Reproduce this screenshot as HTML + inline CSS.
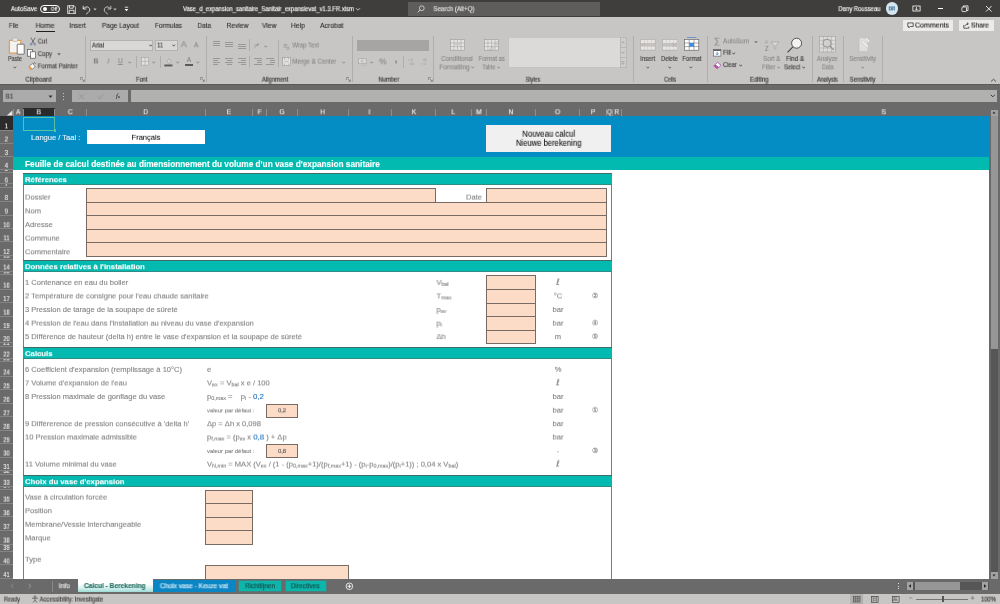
<!DOCTYPE html>
<html lang="fr"><head><meta charset="utf-8"><title>Vase_d_expansion_sanitaire_Sanitair_expansievat_v1.3.FR.xlsm - Excel</title>
<style>
html,body{margin:0;padding:0;background:#fff;}
body{width:1000px;height:604px;position:relative;overflow:hidden;font-family:"Liberation Sans",sans-serif;}
#app{position:absolute;left:0;top:0;width:1000px;height:604px;overflow:hidden;}
#app div,#app svg{position:absolute;}
.t{white-space:nowrap;will-change:transform;-webkit-text-stroke:0.12px;}
sub{font-size:72%;vertical-align:baseline;position:relative;top:0.25em;line-height:0;}
</style></head><body><div id="app">
<div style="left:0px;top:0px;width:1000px;height:17.3px;background:#3f3e3d;"></div>
<div class="t" style="top:5px;line-height:7px;height:7px;font-size:6.6px;color:#fff;left:10px;transform:translate(0.90px,0.16px) rotate(0.02deg) scaleX(0.916);transform-origin:0 50%;">AutoSave</div>
<div style="left:40.3px;top:4.5px;width:20.2px;height:8.6px;border:0.8px solid #fff;border-radius:5px;box-sizing:border-box;"></div>
<div style="left:43.2px;top:6.9px;width:3.7px;height:3.7px;border-radius:2px;background:#fff;"></div>
<div class="t" style="top:5px;line-height:6px;height:6px;font-size:5.6px;color:#fff;left:-96px;width:300px;text-align:center;transform:translate(0.10px,0.80px) rotate(0.02deg) scaleX(0.842);transform-origin:50% 50%;">Off</div>
<svg style="left:67px;top:4.8px;" width="9.4" height="9.4" viewBox="0 0 9.4 9.4"><path d="M0.7 0.7h6.4l1.6 1.6v6.4h-8z M2.4 0.7v2.5h3.8v-2.5 M2.2 8.7v-3.4h4.8v3.4" fill="none" stroke="#fff" stroke-width="0.8"/></svg>
<svg style="left:82px;top:4.5px;" width="9" height="10" viewBox="0 0 9 10"><path d="M1.2 0.8v3.2h3.2 M1.4 3.9c1.2-2 3.6-2.6 5.2-1.4 1.8 1.4 1.4 3.8-0.4 5l-2 1.6" fill="none" stroke="#fff" stroke-width="0.8"/></svg>
<svg style="left:93px;top:7.8px;" width="4" height="3" viewBox="0 0 4 3"><path d="M0.3 0.5h3.4l-1.7 2z" fill="#bbb"/></svg>
<svg style="left:102.5px;top:4.5px;" width="9" height="10" viewBox="0 0 9 10"><path d="M7.8 0.8v3.2h-3.2 M7.6 3.9c-1.2-2-3.6-2.6-5.2-1.4-1.8 1.4-1.4 3.8 0.4 5l2 1.6" fill="none" stroke="#ddd" stroke-width="0.8"/></svg>
<svg style="left:113px;top:7.8px;" width="4" height="3" viewBox="0 0 4 3"><path d="M0.3 0.5h3.4l-1.7 2z" fill="#bbb"/></svg>
<svg style="left:124.2px;top:6px;" width="5" height="6" viewBox="0 0 5 6"><path d="M0.8 1.2h3.4" stroke="#fff" stroke-width="0.8"/><path d="M0.6 3h3.8l-1.9 2.2z" fill="#fff"/></svg>
<div class="t" style="top:5px;line-height:7px;height:7px;font-size:6.6px;color:#fff;left:183px;transform:translate(0.00px,0.16px) rotate(0.02deg) scaleX(0.894);transform-origin:0 50%;">Vase_d_expansion_sanitaire_Sanitair_expansievat_v1.3.FR.xlsm</div>
<svg style="left:355px;top:6.6px;" width="6" height="5" viewBox="0 0 6 5"><path d="M1 1.2l2 2 2-2" fill="none" stroke="#fff" stroke-width="0.7"/></svg>
<div style="left:408px;top:2px;width:192px;height:13.5px;background:#5e5d5c;"></div>
<svg style="left:417px;top:4.5px;" width="8" height="8" viewBox="0 0 8 8"><circle cx="4.8" cy="3.2" r="2.4" fill="none" stroke="#eee" stroke-width="0.7"/><path d="M3.1 4.9l-2.4 2.4" stroke="#eee" stroke-width="0.8"/></svg>
<div class="t" style="top:5px;line-height:7px;height:7px;font-size:6.6px;color:#e6e6e6;left:433px;transform:translate(0.50px,0.16px) rotate(0.02deg) scaleX(0.936);transform-origin:0 50%;">Search (Alt+Q)</div>
<div class="t" style="top:5px;line-height:7px;height:7px;font-size:6.6px;color:#fff;left:580px;width:300px;text-align:right;transform:translate(0.50px,0.16px) rotate(0.02deg) scaleX(0.895);transform-origin:100% 50%;">Dany Rousseau</div>
<div style="left:885.5px;top:2.2px;width:12.6px;height:12.6px;border-radius:7px;background:#d6e6ef;"></div>
<div class="t" style="top:6px;line-height:5px;height:5px;font-size:4.6px;color:#2b5f8a;font-weight:bold;left:741px;width:300px;text-align:center;transform:translate(0.80px,0.45px) rotate(0.02deg);transform-origin:50% 50%;">DR</div>
<svg style="left:911.5px;top:4.5px;" width="9" height="8" viewBox="0 0 9 8"><rect x="0.9" y="1" width="7.2" height="5" fill="none" stroke="#fff" stroke-width="0.8"/><path d="M4.5 2v3 M3.2 3.8l1.3 1.3 1.3-1.3" fill="none" stroke="#fff" stroke-width="0.7"/></svg>
<div style="left:937.5px;top:8px;width:5.5px;height:0.9px;background:#fff;"></div>
<svg style="left:960.5px;top:5px;" width="8" height="8" viewBox="0 0 8 8"><rect x="0.9" y="2" width="4.6" height="4.6" rx="0.8" fill="none" stroke="#fff" stroke-width="0.8"/><path d="M2.4 2V0.9h4.6v4.6H5.6" fill="none" stroke="#fff" stroke-width="0.8"/></svg>
<svg style="left:984.5px;top:5px;" width="8" height="8" viewBox="0 0 8 8"><path d="M1 1l5.6 5.6 M6.6 1L1 6.6" stroke="#fff" stroke-width="0.85"/></svg>
<div style="left:0px;top:17.3px;width:1000px;height:67px;background:#c8c6c4;"></div>
<div class="t" style="top:21px;line-height:7px;height:7px;font-size:7px;color:#2f2e2d;left:-137px;width:300px;text-align:center;transform:translate(0.70px,0.91px) rotate(0.02deg) scaleX(0.833);transform-origin:50% 50%;">File</div>
<div class="t" style="top:21px;line-height:7px;height:7px;font-size:7px;color:#2f2e2d;left:-105px;width:300px;text-align:center;transform:translate(0.05px,0.91px) rotate(0.02deg) scaleX(1.011);transform-origin:50% 50%;">Home</div>
<div class="t" style="top:21px;line-height:7px;height:7px;font-size:7px;color:#2f2e2d;left:-73px;width:300px;text-align:center;transform:translate(0.60px,0.91px) rotate(0.02deg) scaleX(0.948);transform-origin:50% 50%;">Insert</div>
<div class="t" style="top:21px;line-height:7px;height:7px;font-size:7px;color:#2f2e2d;left:-30px;width:300px;text-align:center;transform:translate(0.50px,0.91px) rotate(0.02deg) scaleX(0.941);transform-origin:50% 50%;">Page Layout</div>
<div class="t" style="top:21px;line-height:7px;height:7px;font-size:7px;color:#2f2e2d;left:18px;width:300px;text-align:center;transform:translate(0.40px,0.91px) rotate(0.02deg) scaleX(0.932);transform-origin:50% 50%;">Formulas</div>
<div class="t" style="top:21px;line-height:7px;height:7px;font-size:7px;color:#2f2e2d;left:54px;width:300px;text-align:center;transform:translate(0.25px,0.91px) rotate(0.02deg) scaleX(0.912);transform-origin:50% 50%;">Data</div>
<div class="t" style="top:21px;line-height:7px;height:7px;font-size:7px;color:#2f2e2d;left:87px;width:300px;text-align:center;transform:translate(0.50px,0.91px) rotate(0.02deg) scaleX(0.958);transform-origin:50% 50%;">Review</div>
<div class="t" style="top:21px;line-height:7px;height:7px;font-size:7px;color:#2f2e2d;left:119px;width:300px;text-align:center;transform:translate(0.25px,0.91px) rotate(0.02deg) scaleX(0.964);transform-origin:50% 50%;">View</div>
<div class="t" style="top:21px;line-height:7px;height:7px;font-size:7px;color:#2f2e2d;left:148px;width:300px;text-align:center;transform:translate(0.00px,0.91px) rotate(0.02deg) scaleX(0.972);transform-origin:50% 50%;">Help</div>
<div class="t" style="top:21px;line-height:7px;height:7px;font-size:7px;color:#2f2e2d;left:181px;width:300px;text-align:center;transform:translate(0.75px,0.91px) rotate(0.02deg) scaleX(0.974);transform-origin:50% 50%;">Acrobat</div>
<div style="left:35.6px;top:31px;width:19.2px;height:1.4px;background:#1e1e1e;"></div>
<div style="left:903px;top:20px;width:49.5px;height:11px;background:#ecebea;"></div>
<svg style="left:907px;top:22.2px;" width="7" height="7" viewBox="0 0 7 7"><path d="M0.8 0.9h5.4v3.6H3.2L1.8 5.9V4.5H0.8z" fill="none" stroke="#222" stroke-width="0.7"/></svg>
<div class="t" style="top:21px;line-height:7px;height:7px;font-size:6.8px;color:#222;left:915px;transform:translate(0.00px,0.53px) rotate(0.02deg) scaleX(1.035);transform-origin:0 50%;">Comments</div>
<div style="left:959px;top:20px;width:34.5px;height:11px;background:#ecebea;"></div>
<svg style="left:962.5px;top:22px;" width="7" height="7" viewBox="0 0 7 7"><path d="M0.8 3v3.2h5V4.6" fill="none" stroke="#222" stroke-width="0.7"/><path d="M2 4.2c0.4-1.6 1.6-2.4 3-2.4 M4 0.6l1.4 1.2L4 3" fill="none" stroke="#222" stroke-width="0.7"/></svg>
<div class="t" style="top:21px;line-height:7px;height:7px;font-size:6.8px;color:#222;left:971px;transform:translate(0.00px,0.53px) rotate(0.02deg) scaleX(0.992);transform-origin:0 50%;">Share</div>
<div style="left:85.3px;top:36px;width:0.8px;height:46px;background:#b0aeac;"></div>
<div style="left:206.3px;top:36px;width:0.8px;height:46px;background:#b0aeac;"></div>
<div style="left:352.4px;top:36px;width:0.8px;height:46px;background:#b0aeac;"></div>
<div style="left:433.3px;top:36px;width:0.8px;height:46px;background:#b0aeac;"></div>
<div style="left:632.5px;top:36px;width:0.8px;height:46px;background:#b0aeac;"></div>
<div style="left:706.6px;top:36px;width:0.8px;height:46px;background:#b0aeac;"></div>
<div style="left:811.5px;top:36px;width:0.8px;height:46px;background:#b0aeac;"></div>
<div style="left:843.2px;top:36px;width:0.8px;height:46px;background:#b0aeac;"></div>
<div style="left:882.3px;top:36px;width:0.8px;height:46px;background:#b0aeac;"></div>
<div class="t" style="top:75px;line-height:7px;height:7px;font-size:6.5px;color:#383838;left:-112px;width:300px;text-align:center;transform:translate(0.50px,0.73px) rotate(0.02deg) scaleX(0.934);transform-origin:50% 50%;-webkit-text-stroke:0.18px;">Clipboard</div>
<div class="t" style="top:75px;line-height:7px;height:7px;font-size:6.5px;color:#383838;left:-9px;width:300px;text-align:center;transform:translate(0.75px,0.73px) rotate(0.02deg) scaleX(0.884);transform-origin:50% 50%;-webkit-text-stroke:0.18px;">Font</div>
<div class="t" style="top:75px;line-height:7px;height:7px;font-size:6.5px;color:#383838;left:125px;width:300px;text-align:center;transform:translate(0.10px,0.73px) rotate(0.02deg) scaleX(0.906);transform-origin:50% 50%;-webkit-text-stroke:0.18px;">Alignment</div>
<div class="t" style="top:75px;line-height:7px;height:7px;font-size:6.5px;color:#383838;left:238px;width:300px;text-align:center;transform:translate(0.70px,0.73px) rotate(0.02deg) scaleX(0.899);transform-origin:50% 50%;-webkit-text-stroke:0.18px;">Number</div>
<div class="t" style="top:75px;line-height:7px;height:7px;font-size:6.5px;color:#383838;left:382px;width:300px;text-align:center;transform:translate(0.95px,0.73px) rotate(0.02deg) scaleX(0.830);transform-origin:50% 50%;-webkit-text-stroke:0.18px;">Styles</div>
<div class="t" style="top:75px;line-height:7px;height:7px;font-size:6.5px;color:#383838;left:520px;width:300px;text-align:center;transform:translate(0.10px,0.73px) rotate(0.02deg) scaleX(0.816);transform-origin:50% 50%;-webkit-text-stroke:0.18px;">Cells</div>
<div class="t" style="top:75px;line-height:7px;height:7px;font-size:6.5px;color:#383838;left:609px;width:300px;text-align:center;transform:translate(0.25px,0.73px) rotate(0.02deg) scaleX(0.931);transform-origin:50% 50%;-webkit-text-stroke:0.18px;">Editing</div>
<div class="t" style="top:75px;line-height:7px;height:7px;font-size:6.5px;color:#383838;left:677px;width:300px;text-align:center;transform:translate(0.40px,0.73px) rotate(0.02deg) scaleX(0.859);transform-origin:50% 50%;-webkit-text-stroke:0.18px;">Analysis</div>
<div class="t" style="top:75px;line-height:7px;height:7px;font-size:6.5px;color:#383838;left:712px;width:300px;text-align:center;transform:translate(0.75px,0.73px) rotate(0.02deg) scaleX(0.878);transform-origin:50% 50%;-webkit-text-stroke:0.18px;">Sensitivity</div>
<svg style="left:79.5px;top:77px;" width="5" height="5" viewBox="0 0 5 5"><path d="M0.6 3V0.6H3 M2 2l2.2 2.2 M4.3 2.6v1.7H2.6" fill="none" stroke="#666" stroke-width="0.6"/></svg>
<svg style="left:200px;top:77px;" width="5" height="5" viewBox="0 0 5 5"><path d="M0.6 3V0.6H3 M2 2l2.2 2.2 M4.3 2.6v1.7H2.6" fill="none" stroke="#666" stroke-width="0.6"/></svg>
<svg style="left:346px;top:77px;" width="5" height="5" viewBox="0 0 5 5"><path d="M0.6 3V0.6H3 M2 2l2.2 2.2 M4.3 2.6v1.7H2.6" fill="none" stroke="#666" stroke-width="0.6"/></svg>
<svg style="left:427.5px;top:77px;" width="5" height="5" viewBox="0 0 5 5"><path d="M0.6 3V0.6H3 M2 2l2.2 2.2 M4.3 2.6v1.7H2.6" fill="none" stroke="#666" stroke-width="0.6"/></svg>
<svg style="left:8px;top:36.5px;" width="17" height="18" viewBox="0 0 17 18"><rect x="1.4" y="3.4" width="11.4" height="12.8" rx="0.8" fill="#f7f4f0" stroke="#dba05c" stroke-width="1.2"/><rect x="4.6" y="1" width="5" height="3.4" rx="1" fill="#e9e7e4" stroke="#a8a6a4" stroke-width="0.6"/><rect x="9.2" y="7.2" width="7" height="10" rx="0.6" fill="#fff" stroke="#555" stroke-width="0.8"/></svg>
<div class="t" style="top:55px;line-height:7px;height:7px;font-size:6.6px;color:#3b3a39;left:-135px;width:300px;text-align:center;transform:translate(0.00px,0.06px) rotate(0.02deg) scaleX(0.830);transform-origin:50% 50%;">Paste</div>
<svg style="left:13.2px;top:65.7px;" width="3.6" height="3" viewBox="0 0 3.6 3"><path d="M0.4 0.6l1.4 1.6 1.4-1.6" fill="none" stroke="#555" stroke-width="0.85"/></svg>
<svg style="left:28.5px;top:37.3px;" width="8" height="9" viewBox="0 0 8 9"><path d="M1.8 0.6l3.6 6 M6.2 0.6l-3.6 6" stroke="#4a4a4a" stroke-width="0.7"/><circle cx="2.2" cy="7.3" r="0.9" fill="none" stroke="#4a66a8" stroke-width="0.6"/><circle cx="5.8" cy="7.3" r="0.9" fill="none" stroke="#4a66a8" stroke-width="0.6"/></svg>
<div class="t" style="top:37px;line-height:7px;height:7px;font-size:6.6px;color:#3b3a39;left:37px;transform:translate(0.80px,0.56px) rotate(0.02deg) scaleX(0.896);transform-origin:0 50%;">Cut</div>
<svg style="left:27.2px;top:49px;" width="9.5" height="10" viewBox="0 0 9.5 10"><rect x="0.6" y="0.6" width="5" height="6.6" fill="#fff" stroke="#555" stroke-width="0.7"/><rect x="3.6" y="2.8" width="5" height="6.4" fill="#fff" stroke="#555" stroke-width="0.7"/></svg>
<div class="t" style="top:50px;line-height:7px;height:7px;font-size:6.6px;color:#3b3a39;left:37px;transform:translate(0.80px,0.16px) rotate(0.02deg) scaleX(0.922);transform-origin:0 50%;">Copy</div>
<svg style="left:57px;top:53.4px;" width="4" height="2.6" viewBox="0 0 4 2.6"><path d="M0.2 0.2h3.6l-1.8 2.2z" fill="#666"/></svg>
<svg style="left:27.8px;top:61.5px;" width="9" height="10" viewBox="0 0 9 10"><path d="M1.2 4.2l3.4-2.6 2.6 3.2-3.4 2.6z" fill="#fff" stroke="#555" stroke-width="0.6"/><path d="M0.6 5l2.2 3.2 1.6-1.2-2.4-3z" fill="#e8923a"/><path d="M5.2 1.8l1.6-1.2 1 1.2" fill="none" stroke="#555" stroke-width="0.7"/></svg>
<div class="t" style="top:62px;line-height:7px;height:7px;font-size:6.6px;color:#3b3a39;left:37px;transform:translate(0.80px,0.36px) rotate(0.02deg) scaleX(0.917);transform-origin:0 50%;">Format Painter</div>
<div style="left:90.2px;top:39.5px;width:62.8px;height:11.7px;background:#dad8d6;border:0.6px solid #b4b2b0;box-sizing:border-box;"></div>
<div class="t" style="top:41px;line-height:7px;height:7px;font-size:6.6px;color:#333;left:91px;transform:translate(0.90px,0.56px) rotate(0.02deg) scaleX(0.924);transform-origin:0 50%;">Arial</div>
<svg style="left:148.5px;top:44.3px;" width="3.4" height="3" viewBox="0 0 3.4 3"><path d="M0.4 0.6l1.2999999999999998 1.6 1.2999999999999998-1.6" fill="none" stroke="#444" stroke-width="0.85"/></svg>
<div style="left:155.4px;top:39.5px;width:22.2px;height:11.7px;background:#dad8d6;border:0.6px solid #b4b2b0;box-sizing:border-box;"></div>
<div class="t" style="top:41px;line-height:7px;height:7px;font-size:6.6px;color:#333;left:157px;transform:translate(0.20px,0.56px) rotate(0.02deg) scaleX(0.846);transform-origin:0 50%;">11</div>
<svg style="left:172.4px;top:44.3px;" width="3.4" height="3" viewBox="0 0 3.4 3"><path d="M0.4 0.6l1.2999999999999998 1.6 1.2999999999999998-1.6" fill="none" stroke="#444" stroke-width="0.85"/></svg>
<div class="t" style="top:39px;line-height:10px;height:10px;font-size:8.6px;color:#838180;left:33px;width:300px;text-align:center;transform:translate(0.70px,0.18px) rotate(0.02deg);transform-origin:50% 50%;-webkit-text-stroke:0.06px;">A</div>
<div class="t" style="top:41px;line-height:7px;height:7px;font-size:6.8px;color:#838180;left:46px;width:300px;text-align:center;transform:translate(0.20px,0.33px) rotate(0.02deg);transform-origin:50% 50%;-webkit-text-stroke:0.06px;">A</div>
<div class="t" style="top:57px;line-height:7px;height:7px;font-size:7px;color:#838180;font-weight:bold;left:-54px;width:300px;text-align:center;transform:translate(0.00px,0.41px) rotate(0.02deg);transform-origin:50% 50%;-webkit-text-stroke:0.06px;">B</div>
<div class="t" style="top:57px;line-height:7px;height:7px;font-size:7px;color:#838180;left:-42px;width:300px;text-align:center;transform:translate(0.40px,0.41px) rotate(0.02deg);transform-origin:50% 50%;-webkit-text-stroke:0.06px;font-style:italic;">I</div>
<div class="t" style="top:57px;line-height:7px;height:7px;font-size:7px;color:#838180;left:-30px;width:300px;text-align:center;transform:translate(0.40px,0.21px) rotate(0.02deg);transform-origin:50% 50%;-webkit-text-stroke:0.06px;text-decoration:underline;">U</div>
<svg style="left:127.99999999999999px;top:60.5px;" width="3.4" height="3" viewBox="0 0 3.4 3"><path d="M0.4 0.6l1.2999999999999998 1.6 1.2999999999999998-1.6" fill="none" stroke="#838180" stroke-width="0.85"/></svg>
<div style="left:136.3px;top:56px;width:0.7px;height:12px;background:#b0aeac;"></div>
<svg style="left:140.5px;top:57px;" width="8" height="8.6" viewBox="0 0 8 8.6"><rect x="0.5" y="0.5" width="7" height="7.6" fill="#e4e2e0" stroke="#a4a2a0" stroke-width="0.6"/><path d="M4 0.5v7.6M0.5 4.3h7" stroke="#a4a2a0" stroke-width="0.6"/></svg>
<svg style="left:152.3px;top:60.5px;" width="3.4" height="3" viewBox="0 0 3.4 3"><path d="M0.4 0.6l1.2999999999999998 1.6 1.2999999999999998-1.6" fill="none" stroke="#838180" stroke-width="0.85"/></svg>
<div style="left:160.1px;top:56px;width:0.7px;height:12px;background:#b0aeac;"></div>
<svg style="left:164.4px;top:56.5px;" width="9" height="10" viewBox="0 0 9 10"><path d="M3 4.6l2-3 2.2 3-2.1 1.8z" fill="#d8d6d4" stroke="#9a9896" stroke-width="0.6"/><rect x="0.3" y="7.5" width="8.2" height="1.9" fill="#5c5a58"/></svg>
<svg style="left:176.4px;top:60.5px;" width="3.4" height="3" viewBox="0 0 3.4 3"><path d="M0.4 0.6l1.2999999999999998 1.6 1.2999999999999998-1.6" fill="none" stroke="#838180" stroke-width="0.85"/></svg>
<div class="t" style="top:56px;line-height:7px;height:7px;font-size:6.6px;color:#838180;left:39px;width:300px;text-align:center;transform:translate(0.00px,0.06px) rotate(0.02deg);transform-origin:50% 50%;-webkit-text-stroke:0.06px;">A</div>
<div style="left:185px;top:64px;width:8.2px;height:1.9px;background:#5c5a58;"></div>
<svg style="left:196.20000000000002px;top:60.5px;" width="3.4" height="3" viewBox="0 0 3.4 3"><path d="M0.4 0.6l1.2999999999999998 1.6 1.2999999999999998-1.6" fill="none" stroke="#838180" stroke-width="0.85"/></svg>
<div style="left:212.8px;top:41px;width:7.2px;height:0.8px;background:#9a9896;"></div>
<div style="left:212.8px;top:43px;width:7.2px;height:0.8px;background:#9a9896;"></div>
<div style="left:212.8px;top:45px;width:7.2px;height:0.8px;background:#9a9896;"></div>
<div style="left:225.4px;top:42.4px;width:7.6px;height:0.8px;background:#9a9896;"></div>
<div style="left:225.4px;top:44.4px;width:7.6px;height:0.8px;background:#9a9896;"></div>
<div style="left:225.4px;top:46.4px;width:7.6px;height:0.8px;background:#9a9896;"></div>
<div style="left:238px;top:44.2px;width:7.5px;height:0.8px;background:#9a9896;"></div>
<div style="left:238px;top:46.2px;width:7.5px;height:0.8px;background:#9a9896;"></div>
<div style="left:238px;top:48.2px;width:7.5px;height:0.8px;background:#9a9896;"></div>
<div style="left:249.2px;top:39px;width:0.7px;height:12px;background:#b0aeac;"></div>
<svg style="left:253px;top:40.5px;" width="8" height="9" viewBox="0 0 8 9"><path d="M1 7.4l5-5.4" stroke="#9a9896" stroke-width="0.7"/><text x="1.2" y="4.8" font-size="4.4" fill="#8f8d8b" font-family="Liberation Sans, sans-serif" font-style="italic">ab</text></svg>
<svg style="left:264.0px;top:44.5px;" width="3.4" height="3" viewBox="0 0 3.4 3"><path d="M0.4 0.6l1.2999999999999998 1.6 1.2999999999999998-1.6" fill="none" stroke="#838180" stroke-width="0.85"/></svg>
<div style="left:278.2px;top:40px;width:0.7px;height:27px;background:#b0aeac;"></div>
<svg style="left:283px;top:41.5px;" width="7" height="8" viewBox="0 0 7 8"><text x="0.2" y="3.6" font-size="3.8" fill="#8f8d8b" font-family="Liberation Sans, sans-serif">ab</text><path d="M0.6 5.2h4.6a1 1 0 0 1 0 2H3.2" fill="none" stroke="#8f8d8b" stroke-width="0.6"/></svg>
<div class="t" style="top:41px;line-height:7px;height:7px;font-size:6.6px;color:#838180;left:292px;transform:translate(0.40px,0.46px) rotate(0.02deg) scaleX(0.903);transform-origin:0 50%;-webkit-text-stroke:0.06px;">Wrap Text</div>
<div style="left:212.8px;top:57.8px;width:7.2px;height:0.8px;background:#9a9896;"></div>
<div style="left:212.8px;top:59.8px;width:5px;height:0.8px;background:#9a9896;"></div>
<div style="left:212.8px;top:61.8px;width:7.2px;height:0.8px;background:#9a9896;"></div>
<div style="left:212.8px;top:63.8px;width:5px;height:0.8px;background:#9a9896;"></div>
<div style="left:225.4px;top:57.8px;width:7.6px;height:0.8px;background:#9a9896;"></div>
<div style="left:226.70000000000002px;top:59.8px;width:5px;height:0.8px;background:#9a9896;"></div>
<div style="left:225.4px;top:61.8px;width:7.6px;height:0.8px;background:#9a9896;"></div>
<div style="left:226.70000000000002px;top:63.8px;width:5px;height:0.8px;background:#9a9896;"></div>
<div style="left:238px;top:57.8px;width:7.5px;height:0.8px;background:#9a9896;"></div>
<div style="left:240.5px;top:59.8px;width:5px;height:0.8px;background:#9a9896;"></div>
<div style="left:238px;top:61.8px;width:7.5px;height:0.8px;background:#9a9896;"></div>
<div style="left:240.5px;top:63.8px;width:5px;height:0.8px;background:#9a9896;"></div>
<div style="left:249.2px;top:56px;width:0.7px;height:12px;background:#b0aeac;"></div>
<div style="left:253.7px;top:57.8px;width:8.3px;height:0.8px;background:#9a9896;"></div>
<div style="left:257.2px;top:59.8px;width:4.8px;height:0.8px;background:#9a9896;"></div>
<div style="left:257.2px;top:61.8px;width:4.8px;height:0.8px;background:#9a9896;"></div>
<div style="left:253.7px;top:63.8px;width:8.3px;height:0.8px;background:#9a9896;"></div>
<div style="left:265.7px;top:57.8px;width:8.8px;height:0.8px;background:#9a9896;"></div>
<div style="left:269.5px;top:59.8px;width:5px;height:0.8px;background:#9a9896;"></div>
<div style="left:269.5px;top:61.8px;width:5px;height:0.8px;background:#9a9896;"></div>
<div style="left:265.7px;top:63.8px;width:8.8px;height:0.8px;background:#9a9896;"></div>
<svg style="left:282px;top:57px;" width="9" height="9.4" viewBox="0 0 9 9.4"><rect x="0.6" y="0.6" width="7.8" height="8" fill="#e4e2e0" stroke="#9a9896" stroke-width="0.6"/><path d="M2.4 4.6h4.2 M2.6 0.6v2.2 M6.4 0.6v2.2 M2.6 6.4v2.2 M6.4 6.4v2.2" stroke="#9a9896" stroke-width="0.5"/></svg>
<div class="t" style="top:57px;line-height:7px;height:7px;font-size:6.6px;color:#838180;left:292px;transform:translate(0.40px,0.66px) rotate(0.02deg) scaleX(0.941);transform-origin:0 50%;-webkit-text-stroke:0.06px;">Merge &amp; Center</div>
<svg style="left:341.7px;top:60.7px;" width="3.4" height="3" viewBox="0 0 3.4 3"><path d="M0.4 0.6l1.2999999999999998 1.6 1.2999999999999998-1.6" fill="none" stroke="#838180" stroke-width="0.85"/></svg>
<div style="left:356.7px;top:40px;width:72.8px;height:11.3px;background:#a7a5a3;"></div>
<svg style="left:358px;top:57.6px;" width="9" height="8.6" viewBox="0 0 9 8.6"><rect x="0.5" y="0.8" width="7.6" height="5" fill="#dcdad8" stroke="#9a9896" stroke-width="0.5"/><circle cx="4.2" cy="3.3" r="1.1" fill="none" stroke="#9a9896" stroke-width="0.5"/><path d="M5 5.8h3.2v2h-3.2z" fill="#d2d0ce" stroke="#9a9896" stroke-width="0.4"/></svg>
<svg style="left:369.90000000000003px;top:60.5px;" width="3.4" height="3" viewBox="0 0 3.4 3"><path d="M0.4 0.6l1.2999999999999998 1.6 1.2999999999999998-1.6" fill="none" stroke="#838180" stroke-width="0.85"/></svg>
<div class="t" style="top:56px;line-height:10px;height:10px;font-size:8.6px;color:#838180;left:232px;width:300px;text-align:center;transform:translate(0.80px,0.38px) rotate(0.02deg);transform-origin:50% 50%;-webkit-text-stroke:0.06px;">%</div>
<svg style="left:394px;top:59.5px;" width="4" height="5" viewBox="0 0 4 5"><path d="M1.2 0.6h1.6v1.8c0 1-0.6 1.6-1.6 1.8 0.6-0.5 0.8-0.9 0.8-1.6h-0.8z" fill="#8a8886"/></svg>
<div style="left:403px;top:56px;width:0.7px;height:12px;background:#b0aeac;"></div>
<svg style="left:408.4px;top:58px;" width="7.4" height="8" viewBox="0 0 7.4 8"><text x="2.2" y="3" font-size="3.2" fill="#9a9896" font-family="Liberation Sans, sans-serif">.0</text><text x="1.4" y="7" font-size="3.2" fill="#9a9896" font-family="Liberation Sans, sans-serif">.00</text><path d="M0.2 1.8h1.8" stroke="#9a9896" stroke-width="0.5"/></svg>
<svg style="left:421.4px;top:58px;" width="7.4" height="8" viewBox="0 0 7.4 8"><text x="1.4" y="3" font-size="3.2" fill="#9a9896" font-family="Liberation Sans, sans-serif">.00</text><text x="2.6" y="7" font-size="3.2" fill="#9a9896" font-family="Liberation Sans, sans-serif">.0</text><path d="M0.4 5.8h1.8" stroke="#9a9896" stroke-width="0.5"/></svg>
<svg style="left:450px;top:39.4px;" width="15" height="11.6" viewBox="0 0 15 11.6"><rect x="0.4" y="0.4" width="14.2" height="10.799999999999999" fill="#e6e4e2" stroke="#9a9896" stroke-width="0.6"/><path d="M3.95 0.4v10.799999999999999" stroke="#9a9896" stroke-width="0.5"/><path d="M7.50 0.4v10.799999999999999" stroke="#9a9896" stroke-width="0.5"/><path d="M11.05 0.4v10.799999999999999" stroke="#9a9896" stroke-width="0.5"/><path d="M0.4 4.00h14.2" stroke="#9a9896" stroke-width="0.5"/><path d="M0.4 7.60h14.2" stroke="#9a9896" stroke-width="0.5"/><rect x="4" y="3.2" width="7.2" height="3" fill="#c9c7c5"/></svg>
<div class="t" style="top:54px;line-height:7px;height:7px;font-size:6.6px;color:#838180;left:307px;width:300px;text-align:center;transform:translate(0.00px,0.96px) rotate(0.02deg) scaleX(0.961);transform-origin:50% 50%;-webkit-text-stroke:0.06px;">Conditional</div>
<div class="t" style="top:63px;line-height:7px;height:7px;font-size:6.6px;color:#838180;left:304px;width:300px;text-align:center;transform:translate(0.50px,0.36px) rotate(0.02deg) scaleX(0.965);transform-origin:50% 50%;-webkit-text-stroke:0.06px;">Formatting</div>
<svg style="left:471.2px;top:66.0px;" width="3.4" height="3" viewBox="0 0 3.4 3"><path d="M0.4 0.6l1.2999999999999998 1.6 1.2999999999999998-1.6" fill="none" stroke="#838180" stroke-width="0.85"/></svg>
<svg style="left:484.2px;top:39.4px;" width="15.6" height="11.6" viewBox="0 0 15.6 11.6"><rect x="0.4" y="0.4" width="14.2" height="10.799999999999999" fill="#e6e4e2" stroke="#9a9896" stroke-width="0.6"/><path d="M3.95 0.4v10.799999999999999" stroke="#9a9896" stroke-width="0.5"/><path d="M7.50 0.4v10.799999999999999" stroke="#9a9896" stroke-width="0.5"/><path d="M11.05 0.4v10.799999999999999" stroke="#9a9896" stroke-width="0.5"/><path d="M0.4 4.00h14.2" stroke="#9a9896" stroke-width="0.5"/><path d="M0.4 7.60h14.2" stroke="#9a9896" stroke-width="0.5"/><path d="M6.5 10l7.4-7.6 1 1-7.4 7.6-1.6 0.4z" fill="#efedeb" stroke="#8f8d8b" stroke-width="0.6"/></svg>
<div class="t" style="top:54px;line-height:7px;height:7px;font-size:6.6px;color:#838180;left:341px;width:300px;text-align:center;transform:translate(0.70px,0.96px) rotate(0.02deg) scaleX(0.889);transform-origin:50% 50%;-webkit-text-stroke:0.06px;">Format as</div>
<div class="t" style="top:63px;line-height:7px;height:7px;font-size:6.6px;color:#838180;left:338px;width:300px;text-align:center;transform:translate(0.90px,0.36px) rotate(0.02deg) scaleX(0.812);transform-origin:50% 50%;-webkit-text-stroke:0.06px;">Table</div>
<svg style="left:497.1px;top:66.0px;" width="3.4" height="3" viewBox="0 0 3.4 3"><path d="M0.4 0.6l1.2999999999999998 1.6 1.2999999999999998-1.6" fill="none" stroke="#838180" stroke-width="0.85"/></svg>
<div style="left:507.8px;top:36.5px;width:119.2px;height:31.7px;background:#dcdad8;border:0.6px solid #c6c4c2;box-sizing:border-box;"></div>
<div style="left:619.5px;top:36.5px;width:7.5px;height:31.7px;background:#cfcdcb;border:0.6px solid #bab8b6;box-sizing:border-box;"></div>
<div style="left:619.5px;top:46.8px;width:7.5px;height:0.6px;background:#bab8b6;"></div>
<div style="left:619.5px;top:57.4px;width:7.5px;height:0.6px;background:#bab8b6;"></div>
<svg style="left:621.3px;top:40.5px;" width="4" height="3" viewBox="0 0 4 3"><path d="M0.6 2.2l1.4-1.5 1.4 1.5" fill="none" stroke="#8a8886" stroke-width="0.6"/></svg>
<svg style="left:621.3px;top:51px;" width="4" height="3" viewBox="0 0 4 3"><path d="M0.6 0.7l1.4 1.5 1.4-1.5" fill="none" stroke="#8a8886" stroke-width="0.6"/></svg>
<svg style="left:621.3px;top:60.8px;" width="4" height="4" viewBox="0 0 4 4"><path d="M0.6 0.7h2.8 M0.6 1.8l1.4 1.5 1.4-1.5" fill="none" stroke="#8a8886" stroke-width="0.6"/></svg>
<svg style="left:640.3px;top:39.2px;" width="15.5" height="11.6" viewBox="0 0 15.5 11.6"><rect x="0.4" y="0.4" width="14.7" height="10.8" fill="none" stroke="#aeacaa" stroke-width="0.6"/><rect x="0.9" y="0.9" width="3" height="3.3" fill="#e8e6e4"/><rect x="4.5" y="0.9" width="3" height="3.3" fill="#e8e6e4"/><rect x="8.1" y="0.9" width="3" height="3.3" fill="#e8e6e4"/><rect x="11.7" y="0.9" width="3" height="3.3" fill="#e8e6e4"/><rect x="0.9" y="7.4" width="3" height="3.3" fill="#e8e6e4"/><rect x="4.5" y="7.4" width="3" height="3.3" fill="#e8e6e4"/><rect x="8.1" y="7.4" width="3" height="3.3" fill="#e8e6e4"/><rect x="11.7" y="7.4" width="3" height="3.3" fill="#e8e6e4"/><path d="M0.4 4.7h14.7M0.4 6.9h14.7" stroke="#b4b2b0" stroke-width="0.5"/><path d="M2 5.8h3l-1-1" fill="none" stroke="#b0aeac" stroke-width="0.5"/></svg>
<div class="t" style="top:54px;line-height:7px;height:7px;font-size:6.6px;color:#3b3a39;left:497px;width:300px;text-align:center;transform:translate(0.60px,0.96px) rotate(0.02deg) scaleX(0.891);transform-origin:50% 50%;">Insert</div>
<svg style="left:645.8000000000001px;top:65.7px;" width="3.6" height="3" viewBox="0 0 3.6 3"><path d="M0.4 0.6l1.4 1.6 1.4-1.6" fill="none" stroke="#555" stroke-width="0.85"/></svg>
<svg style="left:661.7px;top:39.2px;" width="15.5" height="11.6" viewBox="0 0 15.5 11.6"><rect x="0.4" y="0.4" width="14.7" height="10.8" fill="none" stroke="#aeacaa" stroke-width="0.6"/><rect x="0.9" y="0.9" width="3" height="3.3" fill="#e8e6e4"/><rect x="4.5" y="0.9" width="3" height="3.3" fill="#e8e6e4"/><rect x="8.1" y="0.9" width="3" height="3.3" fill="#e8e6e4"/><rect x="11.7" y="0.9" width="3" height="3.3" fill="#e8e6e4"/><rect x="0.9" y="7.4" width="3" height="3.3" fill="#e8e6e4"/><rect x="4.5" y="7.4" width="3" height="3.3" fill="#e8e6e4"/><rect x="8.1" y="7.4" width="3" height="3.3" fill="#e8e6e4"/><rect x="11.7" y="7.4" width="3" height="3.3" fill="#e8e6e4"/><path d="M0.4 4.7h14.7M0.4 6.9h14.7" stroke="#b4b2b0" stroke-width="0.5"/><path d="M10 3.6l4 4.4M14 3.6l-4 4.4" stroke="#b0aeac" stroke-width="0.7"/></svg>
<div class="t" style="top:54px;line-height:7px;height:7px;font-size:6.6px;color:#3b3a39;left:519px;width:300px;text-align:center;transform:translate(0.50px,0.96px) rotate(0.02deg) scaleX(0.892);transform-origin:50% 50%;">Delete</div>
<svg style="left:667.7px;top:65.7px;" width="3.6" height="3" viewBox="0 0 3.6 3"><path d="M0.4 0.6l1.4 1.6 1.4-1.6" fill="none" stroke="#555" stroke-width="0.85"/></svg>
<svg style="left:684px;top:37.2px;" width="15.5" height="14" viewBox="0 0 15.5 14"><path d="M3 0.5h9.5" stroke="#4a7fd0" stroke-width="0.7"/><g transform="translate(0,2)"><rect x="0.4" y="0.4" width="14.399999999999999" height="10.799999999999999" fill="#fff" stroke="#555" stroke-width="0.6"/><path d="M5.20 0.4v10.799999999999999" stroke="#555" stroke-width="0.5"/><path d="M10.00 0.4v10.799999999999999" stroke="#555" stroke-width="0.5"/><path d="M0.4 4.00h14.399999999999999" stroke="#555" stroke-width="0.5"/><path d="M0.4 7.60h14.399999999999999" stroke="#555" stroke-width="0.5"/><rect x="5.2" y="4" width="4.8" height="3.6" fill="#3a8ee6"/></g></svg>
<div class="t" style="top:54px;line-height:7px;height:7px;font-size:6.6px;color:#3b3a39;left:541px;width:300px;text-align:center;transform:translate(0.90px,0.96px) rotate(0.02deg) scaleX(0.924);transform-origin:50% 50%;">Format</div>
<svg style="left:689.2px;top:65.7px;" width="3.6" height="3" viewBox="0 0 3.6 3"><path d="M0.4 0.6l1.4 1.6 1.4-1.6" fill="none" stroke="#555" stroke-width="0.85"/></svg>
<div class="t" style="top:35px;line-height:10px;height:10px;font-size:8.4px;color:#838180;left:566px;width:300px;text-align:center;transform:translate(0.80px,0.71px) rotate(0.02deg);transform-origin:50% 50%;-webkit-text-stroke:0.06px;">∑</div>
<div class="t" style="top:37px;line-height:7px;height:7px;font-size:6.6px;color:#838180;left:723px;transform:translate(0.10px,0.36px) rotate(0.02deg) scaleX(0.955);transform-origin:0 50%;-webkit-text-stroke:0.06px;">AutoSum</div>
<svg style="left:753.9px;top:40.8px;" width="4" height="2.6" viewBox="0 0 4 2.6"><path d="M0.2 0.2h3.6l-1.8 2.2z" fill="#777"/></svg>
<svg style="left:713.2px;top:49.3px;" width="8.4" height="7.6" viewBox="0 0 8.4 7.6"><rect x="0.5" y="0.5" width="7.4" height="6.6" fill="#fff" stroke="#555" stroke-width="0.6"/><rect x="0.5" y="0.5" width="7.4" height="1.4" fill="#555"/><path d="M4.2 2.7v3 M2.8 4.5l1.4 1.4 1.4-1.4" fill="none" stroke="#3a7fd8" stroke-width="0.8"/></svg>
<div class="t" style="top:48px;line-height:7px;height:7px;font-size:6.6px;color:#3b3a39;left:723px;transform:translate(0.10px,0.76px) rotate(0.02deg) scaleX(0.924);transform-origin:0 50%;">Fill</div>
<svg style="left:732.3px;top:51.7px;" width="3.4" height="3" viewBox="0 0 3.4 3"><path d="M0.4 0.6l1.2999999999999998 1.6 1.2999999999999998-1.6" fill="none" stroke="#444" stroke-width="0.85"/></svg>
<svg style="left:712.8px;top:61.2px;" width="9" height="8.4" viewBox="0 0 9 8.4"><path d="M0.8 5l3.8-3.6 3.4 2.8-3.8 3.6z" fill="#fff" stroke="#a0449a" stroke-width="0.7"/><path d="M0.8 5l1.7-1.6 3.4 2.8-1.7 1.6z" fill="#b04aa8"/></svg>
<div class="t" style="top:61px;line-height:7px;height:7px;font-size:6.6px;color:#3b3a39;left:723px;transform:translate(0.10px,0.06px) rotate(0.02deg) scaleX(0.869);transform-origin:0 50%;">Clear</div>
<svg style="left:738.8px;top:64.1px;" width="3.4" height="3" viewBox="0 0 3.4 3"><path d="M0.4 0.6l1.2999999999999998 1.6 1.2999999999999998-1.6" fill="none" stroke="#444" stroke-width="0.85"/></svg>
<svg style="left:763.6px;top:37.6px;" width="16" height="15" viewBox="0 0 16 15"><text x="0.6" y="6" font-size="6" fill="#a6a4a2" font-family="Liberation Sans, sans-serif">A</text><text x="0.8" y="13.4" font-size="6.6" fill="#8a8886" font-family="Liberation Sans, sans-serif">Z</text><path d="M7 4h8l-3.2 3.6v3.8l-1.6-1v-2.8z" fill="#dad8d6" stroke="#9a9896" stroke-width="0.6"/></svg>
<div class="t" style="top:54px;line-height:7px;height:7px;font-size:6.6px;color:#838180;left:621px;width:300px;text-align:center;transform:translate(0.80px,0.96px) rotate(0.02deg) scaleX(0.928);transform-origin:50% 50%;-webkit-text-stroke:0.06px;">Sort &amp;</div>
<div class="t" style="top:63px;line-height:7px;height:7px;font-size:6.6px;color:#838180;left:618px;width:300px;text-align:center;transform:translate(0.70px,0.36px) rotate(0.02deg) scaleX(0.907);transform-origin:50% 50%;-webkit-text-stroke:0.06px;">Filter</div>
<svg style="left:776.8px;top:66.1px;" width="3.4" height="3" viewBox="0 0 3.4 3"><path d="M0.4 0.6l1.2999999999999998 1.6 1.2999999999999998-1.6" fill="none" stroke="#838180" stroke-width="0.85"/></svg>
<svg style="left:786px;top:36.5px;" width="18" height="17" viewBox="0 0 18 17"><circle cx="10.6" cy="6.2" r="5" fill="#f4f2f0" stroke="#444" stroke-width="0.9"/><path d="M6.8 9.8l-5.2 5.6" stroke="#444" stroke-width="1.1"/></svg>
<div class="t" style="top:54px;line-height:7px;height:7px;font-size:6.6px;color:#3b3a39;left:645px;width:300px;text-align:center;transform:translate(0.00px,0.96px) rotate(0.02deg) scaleX(0.950);transform-origin:50% 50%;">Find &amp;</div>
<div class="t" style="top:63px;line-height:7px;height:7px;font-size:6.6px;color:#3b3a39;left:642px;width:300px;text-align:center;transform:translate(0.30px,0.36px) rotate(0.02deg) scaleX(0.878);transform-origin:50% 50%;">Select</div>
<svg style="left:801.6999999999999px;top:66.1px;" width="3.4" height="3" viewBox="0 0 3.4 3"><path d="M0.4 0.6l1.2999999999999998 1.6 1.2999999999999998-1.6" fill="none" stroke="#444" stroke-width="0.85"/></svg>
<svg style="left:819.3px;top:36.2px;" width="16.8" height="16.4" viewBox="0 0 16.8 16.4"><rect x="0.4" y="0.4" width="16.0" height="15.599999999999998" fill="#dedcda" stroke="#a09e9c" stroke-width="0.6"/><path d="M4.40 0.4v15.599999999999998" stroke="#a09e9c" stroke-width="0.5"/><path d="M8.40 0.4v15.599999999999998" stroke="#a09e9c" stroke-width="0.5"/><path d="M12.40 0.4v15.599999999999998" stroke="#a09e9c" stroke-width="0.5"/><path d="M0.4 4.30h16.0" stroke="#a09e9c" stroke-width="0.5"/><path d="M0.4 8.20h16.0" stroke="#a09e9c" stroke-width="0.5"/><path d="M0.4 12.10h16.0" stroke="#a09e9c" stroke-width="0.5"/><circle cx="8" cy="7.2" r="4" fill="#d2d0ce" stroke="#8f8d8b" stroke-width="0.9"/><path d="M11 10.2l3.8 4" stroke="#8f8d8b" stroke-width="1.1"/></svg>
<div class="t" style="top:54px;line-height:7px;height:7px;font-size:6.6px;color:#838180;left:677px;width:300px;text-align:center;transform:translate(0.40px,0.96px) rotate(0.02deg) scaleX(0.886);transform-origin:50% 50%;-webkit-text-stroke:0.06px;">Analyze</div>
<div class="t" style="top:63px;line-height:7px;height:7px;font-size:6.6px;color:#838180;left:677px;width:300px;text-align:center;transform:translate(0.80px,0.36px) rotate(0.02deg) scaleX(0.825);transform-origin:50% 50%;-webkit-text-stroke:0.06px;">Data</div>
<svg style="left:856.5px;top:36.5px;" width="15" height="15.5" viewBox="0 0 15 15.5"><path d="M2 0.8h6l3 3v10.8H2z" fill="#e0dedc" stroke="#bdbbb9" stroke-width="0.6"/><path d="M6 3.6l5.6 5.6-1.6 1.6-5.6-5.6z" fill="#f2f0ee" stroke="#bdbbb9" stroke-width="0.5"/><path d="M9.6 0.6l3.4 3.4-1.4 1.4-3.4-3.4z" fill="#efedeb" stroke="#bdbbb9" stroke-width="0.5"/></svg>
<div class="t" style="top:54px;line-height:7px;height:7px;font-size:6.6px;color:#838180;left:712px;width:300px;text-align:center;transform:translate(0.70px,0.96px) rotate(0.02deg) scaleX(0.903);transform-origin:50% 50%;-webkit-text-stroke:0.06px;">Sensitivity</div>
<svg style="left:860.5999999999999px;top:65.9px;" width="3.4" height="3" viewBox="0 0 3.4 3"><path d="M0.4 0.6l1.2999999999999998 1.6 1.2999999999999998-1.6" fill="none" stroke="#838180" stroke-width="0.85"/></svg>
<svg style="left:989.5px;top:78px;" width="7" height="5" viewBox="0 0 7 5"><path d="M1 3.6l2.5-2.4 2.5 2.4" fill="none" stroke="#333" stroke-width="0.8"/></svg>
<div style="left:0px;top:84px;width:1000px;height:32px;background:#6a6a6a;"></div>
<div style="left:0px;top:84px;width:1000px;height:1px;background:#5a5a5a;"></div>
<div style="left:3px;top:90px;width:52.5px;height:12.2px;background:#ababab;"></div>
<div class="t" style="top:92px;line-height:7px;height:7px;font-size:7px;color:#3c3c3c;left:5px;transform:translate(0.60px,0.61px) rotate(0.02deg) scaleX(0.888);transform-origin:0 50%;">B1</div>
<svg style="left:47.5px;top:94.5px;" width="5" height="4" viewBox="0 0 5 4"><path d="M0.5 0.6h4l-2 2.4z" fill="#333"/></svg>
<div style="left:62.6px;top:92.5px;width:0.9px;height:1.4px;background:#c8c8c8;"></div>
<div style="left:62.6px;top:95.6px;width:0.9px;height:1.4px;background:#c8c8c8;"></div>
<div style="left:62.6px;top:98.7px;width:0.9px;height:1.4px;background:#c8c8c8;"></div>
<div style="left:72px;top:90px;width:56px;height:12.2px;background:#ababab;"></div>
<svg style="left:78px;top:93px;" width="7" height="7" viewBox="0 0 7 7"><path d="M1 1l5 5M6 1L1 6" stroke="#8d8d8d" stroke-width="0.7"/></svg>
<svg style="left:97px;top:93px;" width="7" height="7" viewBox="0 0 7 7"><path d="M0.8 3.8l1.8 2 3.6-4.6" fill="none" stroke="#8d8d8d" stroke-width="0.7"/></svg>
<div class="t" style="top:92px;line-height:7px;height:7px;font-size:6.6px;color:#333;left:-32px;width:300px;text-align:center;transform:translate(0.00px,0.06px) rotate(0.02deg);transform-origin:50% 50%;font-style:italic;font-family:'Liberation Serif',serif;">f<span style='font-size:4.6px'>x</span></div>
<div style="left:131px;top:90px;width:866px;height:12.2px;background:#b1b1af;"></div>
<svg style="left:990px;top:94.2px;" width="6" height="4.5" viewBox="0 0 6 4.5"><path d="M0.8 0.8l2 2 2-2" fill="none" stroke="#2a2a2a" stroke-width="0.9"/></svg>
<div style="left:23px;top:107.8px;width:31.6px;height:8.2px;background:#2b2b2b;"></div>
<div class="t" style="top:108px;line-height:7px;height:7px;font-size:6.6px;color:#f2f2f2;left:-132px;width:300px;text-align:center;transform:translate(0.25px,0.26px) rotate(0.02deg);transform-origin:50% 50%;">A</div>
<div style="left:22.6px;top:108.5px;width:0.8px;height:7.5px;background:#8e8e8e;"></div>
<div class="t" style="top:108px;line-height:7px;height:7px;font-size:6.6px;color:#f2f2f2;left:-112px;width:300px;text-align:center;transform:translate(0.80px,0.26px) rotate(0.02deg);transform-origin:50% 50%;">B</div>
<div style="left:54.2px;top:108.5px;width:0.8px;height:7.5px;background:#8e8e8e;"></div>
<div class="t" style="top:108px;line-height:7px;height:7px;font-size:6.6px;color:#f2f2f2;left:-80px;width:300px;text-align:center;transform:translate(0.45px,0.26px) rotate(0.02deg);transform-origin:50% 50%;">C</div>
<div style="left:85.89999999999999px;top:108.5px;width:0.8px;height:7.5px;background:#8e8e8e;"></div>
<div class="t" style="top:108px;line-height:7px;height:7px;font-size:6.6px;color:#f2f2f2;left:-5px;width:300px;text-align:center;transform:translate(0.75px,0.26px) rotate(0.02deg);transform-origin:50% 50%;">D</div>
<div style="left:204.79999999999998px;top:108.5px;width:0.8px;height:7.5px;background:#8e8e8e;"></div>
<div class="t" style="top:108px;line-height:7px;height:7px;font-size:6.6px;color:#f2f2f2;left:79px;width:300px;text-align:center;transform:translate(0.00px,0.26px) rotate(0.02deg);transform-origin:50% 50%;">E</div>
<div style="left:252.4px;top:108.5px;width:0.8px;height:7.5px;background:#8e8e8e;"></div>
<div class="t" style="top:108px;line-height:7px;height:7px;font-size:6.6px;color:#f2f2f2;left:109px;width:300px;text-align:center;transform:translate(0.70px,0.26px) rotate(0.02deg);transform-origin:50% 50%;">F</div>
<div style="left:266.20000000000005px;top:108.5px;width:0.8px;height:7.5px;background:#8e8e8e;"></div>
<div class="t" style="top:108px;line-height:7px;height:7px;font-size:6.6px;color:#f2f2f2;left:131px;width:300px;text-align:center;transform:translate(0.95px,0.26px) rotate(0.02deg);transform-origin:50% 50%;">G</div>
<div style="left:296.90000000000003px;top:108.5px;width:0.8px;height:7.5px;background:#8e8e8e;"></div>
<div class="t" style="top:108px;line-height:7px;height:7px;font-size:6.6px;color:#f2f2f2;left:172px;width:300px;text-align:center;transform:translate(0.65px,0.26px) rotate(0.02deg);transform-origin:50% 50%;">H</div>
<div style="left:347.6px;top:108.5px;width:0.8px;height:7.5px;background:#8e8e8e;"></div>
<div class="t" style="top:108px;line-height:7px;height:7px;font-size:6.6px;color:#f2f2f2;left:219px;width:300px;text-align:center;transform:translate(0.50px,0.26px) rotate(0.02deg);transform-origin:50% 50%;">I</div>
<div style="left:390.6px;top:108.5px;width:0.8px;height:7.5px;background:#8e8e8e;"></div>
<div class="t" style="top:108px;line-height:7px;height:7px;font-size:6.6px;color:#f2f2f2;left:264px;width:300px;text-align:center;transform:translate(0.10px,0.26px) rotate(0.02deg);transform-origin:50% 50%;">K</div>
<div style="left:434.8px;top:108.5px;width:0.8px;height:7.5px;background:#8e8e8e;"></div>
<div class="t" style="top:108px;line-height:7px;height:7px;font-size:6.6px;color:#f2f2f2;left:303px;width:300px;text-align:center;transform:translate(0.20px,0.26px) rotate(0.02deg);transform-origin:50% 50%;">L</div>
<div style="left:470.8px;top:108.5px;width:0.8px;height:7.5px;background:#8e8e8e;"></div>
<div class="t" style="top:108px;line-height:7px;height:7px;font-size:6.6px;color:#f2f2f2;left:328px;width:300px;text-align:center;transform:translate(0.85px,0.26px) rotate(0.02deg);transform-origin:50% 50%;">M</div>
<div style="left:486.1px;top:108.5px;width:0.8px;height:7.5px;background:#8e8e8e;"></div>
<div class="t" style="top:108px;line-height:7px;height:7px;font-size:6.6px;color:#f2f2f2;left:361px;width:300px;text-align:center;transform:translate(0.05px,0.26px) rotate(0.02deg);transform-origin:50% 50%;">N</div>
<div style="left:535.2px;top:108.5px;width:0.8px;height:7.5px;background:#8e8e8e;"></div>
<div class="t" style="top:108px;line-height:7px;height:7px;font-size:6.6px;color:#f2f2f2;left:407px;width:300px;text-align:center;transform:translate(0.55px,0.26px) rotate(0.02deg);transform-origin:50% 50%;">O</div>
<div style="left:579.1px;top:108.5px;width:0.8px;height:7.5px;background:#8e8e8e;"></div>
<div class="t" style="top:108px;line-height:7px;height:7px;font-size:6.6px;color:#f2f2f2;left:443px;width:300px;text-align:center;transform:translate(0.15px,0.26px) rotate(0.02deg);transform-origin:50% 50%;">P</div>
<div style="left:606.4px;top:108.5px;width:0.8px;height:7.5px;background:#8e8e8e;"></div>
<div class="t" style="top:108px;line-height:7px;height:7px;font-size:6.6px;color:#f2f2f2;left:459px;width:300px;text-align:center;transform:translate(0.40px,0.26px) rotate(0.02deg);transform-origin:50% 50%;">Q</div>
<div style="left:611.6px;top:108.5px;width:0.8px;height:7.5px;background:#8e8e8e;"></div>
<div class="t" style="top:108px;line-height:7px;height:7px;font-size:6.6px;color:#f2f2f2;left:466px;width:300px;text-align:center;transform:translate(0.80px,0.26px) rotate(0.02deg);transform-origin:50% 50%;">R</div>
<div style="left:621.2px;top:108.5px;width:0.8px;height:7.5px;background:#8e8e8e;"></div>
<div class="t" style="top:108px;line-height:7px;height:7px;font-size:6.6px;color:#f2f2f2;left:733px;width:300px;text-align:center;transform:translate(0.80px,0.26px) rotate(0.02deg);transform-origin:50% 50%;">S</div>
<div style="left:391px;top:108.5px;width:0.8px;height:7.5px;background:#8e8e8e;"></div>
<div style="left:13px;top:108.5px;width:0.8px;height:7.5px;background:#8e8e8e;"></div>
<svg style="left:5.5px;top:109.5px;" width="7" height="6" viewBox="0 0 7 6"><path d="M6.4 0.4v5.2H0.8z" fill="#e8e8e8"/></svg>
<div style="left:13px;top:116px;width:975.5px;height:463px;background:#fff;"></div>
<div style="left:13px;top:116px;width:975.5px;height:41px;background:#048dc5;"></div>
<div style="left:13px;top:157px;width:975.5px;height:12.6px;background:#03bab0;"></div>
<div style="left:0;top:116px;width:13px;height:463px;overflow:hidden;background:#6a6a6a;">
<div style="left:0;top:0;width:13px;height:14.5px;background:#2b2b2b;"></div>
<div style="left:0;top:0px;width:13px;height:15px;overflow:hidden;"><div class="t" style="left:0;width:13px;text-align:center;bottom:-0.3px;height:8px;line-height:8px;font-size:6.8px;color:#f4f4f4;-webkit-text-stroke:0.1px;transform:translateY(-0.50px) rotate(0.02deg) scaleX(0.84);">1</div></div>
<div style="left:0;top:14px;width:13px;height:1px;background:#858585;"></div>
<div style="left:0;top:15px;width:13px;height:13px;overflow:hidden;"><div class="t" style="left:0;width:13px;text-align:center;bottom:-0.3px;height:8px;line-height:8px;font-size:6.8px;color:#f4f4f4;-webkit-text-stroke:0.1px;transform:translateY(-0.40px) rotate(0.02deg) scaleX(0.84);">2</div></div>
<div style="left:0;top:27px;width:13px;height:1px;background:#858585;"></div>
<div style="left:0;top:28px;width:13px;height:13px;overflow:hidden;"><div class="t" style="left:0;width:13px;text-align:center;bottom:-0.3px;height:8px;line-height:8px;font-size:6.8px;color:#f4f4f4;-webkit-text-stroke:0.1px;transform:translateY(0.00px) rotate(0.02deg) scaleX(0.84);">3</div></div>
<div style="left:0;top:40px;width:13px;height:1px;background:#858585;"></div>
<div style="left:0;top:41px;width:13px;height:13px;overflow:hidden;"><div class="t" style="left:0;width:13px;text-align:center;bottom:-0.3px;height:8px;line-height:8px;font-size:6.8px;color:#f4f4f4;-webkit-text-stroke:0.1px;transform:translateY(-0.20px) rotate(0.02deg) scaleX(0.84);">4</div></div>
<div style="left:0;top:53px;width:13px;height:1px;background:#858585;"></div>
<div style="left:0;top:54px;width:13px;height:3px;overflow:hidden;"><div class="t" style="left:0;width:13px;text-align:center;bottom:-0.3px;height:8px;line-height:8px;font-size:6.8px;color:#f4f4f4;-webkit-text-stroke:0.1px;transform:translateY(0.00px) rotate(0.02deg) scaleX(0.84);">5</div></div>
<div style="left:0;top:56px;width:13px;height:1px;background:#858585;"></div>
<div style="left:0;top:57px;width:13px;height:11px;overflow:hidden;"><div class="t" style="left:0;width:13px;text-align:center;bottom:-0.3px;height:8px;line-height:8px;font-size:6.8px;color:#f4f4f4;-webkit-text-stroke:0.1px;transform:translateY(0.40px) rotate(0.02deg) scaleX(0.84);">6</div></div>
<div style="left:0;top:67px;width:13px;height:1px;background:#858585;"></div>
<div style="left:0;top:68px;width:13px;height:4px;overflow:hidden;"><div class="t" style="left:0;width:13px;text-align:center;bottom:-0.3px;height:8px;line-height:8px;font-size:6.8px;color:#f4f4f4;-webkit-text-stroke:0.1px;transform:translateY(0.00px) rotate(0.02deg) scaleX(0.84);">7</div></div>
<div style="left:0;top:71px;width:13px;height:1px;background:#858585;"></div>
<div style="left:0;top:72px;width:13px;height:14px;overflow:hidden;"><div class="t" style="left:0;width:13px;text-align:center;bottom:-0.3px;height:8px;line-height:8px;font-size:6.8px;color:#f4f4f4;-webkit-text-stroke:0.1px;transform:translateY(-0.10px) rotate(0.02deg) scaleX(0.84);">8</div></div>
<div style="left:0;top:85px;width:13px;height:1px;background:#858585;"></div>
<div style="left:0;top:86px;width:13px;height:14px;overflow:hidden;"><div class="t" style="left:0;width:13px;text-align:center;bottom:-0.3px;height:8px;line-height:8px;font-size:6.8px;color:#f4f4f4;-webkit-text-stroke:0.1px;transform:translateY(-0.40px) rotate(0.02deg) scaleX(0.84);">9</div></div>
<div style="left:0;top:99px;width:13px;height:1px;background:#858585;"></div>
<div style="left:0;top:100px;width:13px;height:13px;overflow:hidden;"><div class="t" style="left:0;width:13px;text-align:center;bottom:-0.3px;height:8px;line-height:8px;font-size:6.8px;color:#f4f4f4;-webkit-text-stroke:0.1px;transform:translateY(0.20px) rotate(0.02deg) scaleX(0.84);">10</div></div>
<div style="left:0;top:112px;width:13px;height:1px;background:#858585;"></div>
<div style="left:0;top:113px;width:13px;height:13px;overflow:hidden;"><div class="t" style="left:0;width:13px;text-align:center;bottom:-0.3px;height:8px;line-height:8px;font-size:6.8px;color:#f4f4f4;-webkit-text-stroke:0.1px;transform:translateY(0.40px) rotate(0.02deg) scaleX(0.84);">11</div></div>
<div style="left:0;top:125px;width:13px;height:1px;background:#858585;"></div>
<div style="left:0;top:126px;width:13px;height:14px;overflow:hidden;"><div class="t" style="left:0;width:13px;text-align:center;bottom:-0.3px;height:8px;line-height:8px;font-size:6.8px;color:#f4f4f4;-webkit-text-stroke:0.1px;transform:translateY(0.10px) rotate(0.02deg) scaleX(0.84);">12</div></div>
<div style="left:0;top:139px;width:13px;height:1px;background:#858585;"></div>
<div style="left:0;top:140px;width:13px;height:4px;overflow:hidden;"><div class="t" style="left:0;width:13px;text-align:center;bottom:-0.3px;height:8px;line-height:8px;font-size:6.8px;color:#f4f4f4;-webkit-text-stroke:0.1px;transform:translateY(-0.20px) rotate(0.02deg) scaleX(0.84);">13</div></div>
<div style="left:0;top:143px;width:13px;height:1px;background:#858585;"></div>
<div style="left:0;top:144px;width:13px;height:12px;overflow:hidden;"><div class="t" style="left:0;width:13px;text-align:center;bottom:-0.3px;height:8px;line-height:8px;font-size:6.8px;color:#f4f4f4;-webkit-text-stroke:0.1px;transform:translateY(-0.40px) rotate(0.02deg) scaleX(0.84);">14</div></div>
<div style="left:0;top:155px;width:13px;height:1px;background:#858585;"></div>
<div style="left:0;top:156px;width:13px;height:3px;overflow:hidden;"><div class="t" style="left:0;width:13px;text-align:center;bottom:-0.3px;height:8px;line-height:8px;font-size:6.8px;color:#f4f4f4;-webkit-text-stroke:0.1px;transform:translateY(0.40px) rotate(0.02deg) scaleX(0.84);">15</div></div>
<div style="left:0;top:158px;width:13px;height:1px;background:#858585;"></div>
<div style="left:0;top:159px;width:13px;height:15px;overflow:hidden;"><div class="t" style="left:0;width:13px;text-align:center;bottom:-0.3px;height:8px;line-height:8px;font-size:6.8px;color:#f4f4f4;-webkit-text-stroke:0.1px;transform:translateY(-0.40px) rotate(0.02deg) scaleX(0.84);">16</div></div>
<div style="left:0;top:173px;width:13px;height:1px;background:#858585;"></div>
<div style="left:0;top:174px;width:13px;height:13px;overflow:hidden;"><div class="t" style="left:0;width:13px;text-align:center;bottom:-0.3px;height:8px;line-height:8px;font-size:6.8px;color:#f4f4f4;-webkit-text-stroke:0.1px;transform:translateY(0.00px) rotate(0.02deg) scaleX(0.84);">17</div></div>
<div style="left:0;top:186px;width:13px;height:1px;background:#858585;"></div>
<div style="left:0;top:187px;width:13px;height:14px;overflow:hidden;"><div class="t" style="left:0;width:13px;text-align:center;bottom:-0.3px;height:8px;line-height:8px;font-size:6.8px;color:#f4f4f4;-webkit-text-stroke:0.1px;transform:translateY(-0.40px) rotate(0.02deg) scaleX(0.84);">18</div></div>
<div style="left:0;top:200px;width:13px;height:1px;background:#858585;"></div>
<div style="left:0;top:201px;width:13px;height:13px;overflow:hidden;"><div class="t" style="left:0;width:13px;text-align:center;bottom:-0.3px;height:8px;line-height:8px;font-size:6.8px;color:#f4f4f4;-webkit-text-stroke:0.1px;transform:translateY(0.10px) rotate(0.02deg) scaleX(0.84);">19</div></div>
<div style="left:0;top:213px;width:13px;height:1px;background:#858585;"></div>
<div style="left:0;top:214px;width:13px;height:13px;overflow:hidden;"><div class="t" style="left:0;width:13px;text-align:center;bottom:-0.3px;height:8px;line-height:8px;font-size:6.8px;color:#f4f4f4;-webkit-text-stroke:0.1px;transform:translateY(0.10px) rotate(0.02deg) scaleX(0.84);">20</div></div>
<div style="left:0;top:226px;width:13px;height:1px;background:#858585;"></div>
<div style="left:0;top:227px;width:13px;height:4px;overflow:hidden;"><div class="t" style="left:0;width:13px;text-align:center;bottom:-0.3px;height:8px;line-height:8px;font-size:6.8px;color:#f4f4f4;-webkit-text-stroke:0.1px;transform:translateY(0.00px) rotate(0.02deg) scaleX(0.84);">21</div></div>
<div style="left:0;top:230px;width:13px;height:1px;background:#858585;"></div>
<div style="left:0;top:231px;width:13px;height:12px;overflow:hidden;"><div class="t" style="left:0;width:13px;text-align:center;bottom:-0.3px;height:8px;line-height:8px;font-size:6.8px;color:#f4f4f4;-webkit-text-stroke:0.1px;transform:translateY(-0.40px) rotate(0.02deg) scaleX(0.84);">22</div></div>
<div style="left:0;top:242px;width:13px;height:1px;background:#858585;"></div>
<div style="left:0;top:243px;width:13px;height:3px;overflow:hidden;"><div class="t" style="left:0;width:13px;text-align:center;bottom:-0.3px;height:8px;line-height:8px;font-size:6.8px;color:#f4f4f4;-webkit-text-stroke:0.1px;transform:translateY(0.40px) rotate(0.02deg) scaleX(0.84);">23</div></div>
<div style="left:0;top:245px;width:13px;height:1px;background:#858585;"></div>
<div style="left:0;top:246px;width:13px;height:15px;overflow:hidden;"><div class="t" style="left:0;width:13px;text-align:center;bottom:-0.3px;height:8px;line-height:8px;font-size:6.8px;color:#f4f4f4;-webkit-text-stroke:0.1px;transform:translateY(-0.40px) rotate(0.02deg) scaleX(0.84);">24</div></div>
<div style="left:0;top:260px;width:13px;height:1px;background:#858585;"></div>
<div style="left:0;top:261px;width:13px;height:13px;overflow:hidden;"><div class="t" style="left:0;width:13px;text-align:center;bottom:-0.3px;height:8px;line-height:8px;font-size:6.8px;color:#f4f4f4;-webkit-text-stroke:0.1px;transform:translateY(0.30px) rotate(0.02deg) scaleX(0.84);">25</div></div>
<div style="left:0;top:273px;width:13px;height:1px;background:#858585;"></div>
<div style="left:0;top:274px;width:13px;height:14px;overflow:hidden;"><div class="t" style="left:0;width:13px;text-align:center;bottom:-0.3px;height:8px;line-height:8px;font-size:6.8px;color:#f4f4f4;-webkit-text-stroke:0.1px;transform:translateY(-0.20px) rotate(0.02deg) scaleX(0.84);">26</div></div>
<div style="left:0;top:287px;width:13px;height:1px;background:#858585;"></div>
<div style="left:0;top:288px;width:13px;height:13px;overflow:hidden;"><div class="t" style="left:0;width:13px;text-align:center;bottom:-0.3px;height:8px;line-height:8px;font-size:6.8px;color:#f4f4f4;-webkit-text-stroke:0.1px;transform:translateY(0.30px) rotate(0.02deg) scaleX(0.84);">27</div></div>
<div style="left:0;top:300px;width:13px;height:1px;background:#858585;"></div>
<div style="left:0;top:301px;width:13px;height:14px;overflow:hidden;"><div class="t" style="left:0;width:13px;text-align:center;bottom:-0.3px;height:8px;line-height:8px;font-size:6.8px;color:#f4f4f4;-webkit-text-stroke:0.1px;transform:translateY(-0.20px) rotate(0.02deg) scaleX(0.84);">28</div></div>
<div style="left:0;top:314px;width:13px;height:1px;background:#858585;"></div>
<div style="left:0;top:315px;width:13px;height:13px;overflow:hidden;"><div class="t" style="left:0;width:13px;text-align:center;bottom:-0.3px;height:8px;line-height:8px;font-size:6.8px;color:#f4f4f4;-webkit-text-stroke:0.1px;transform:translateY(0.30px) rotate(0.02deg) scaleX(0.84);">29</div></div>
<div style="left:0;top:327px;width:13px;height:1px;background:#858585;"></div>
<div style="left:0;top:328px;width:13px;height:14px;overflow:hidden;"><div class="t" style="left:0;width:13px;text-align:center;bottom:-0.3px;height:8px;line-height:8px;font-size:6.8px;color:#f4f4f4;-webkit-text-stroke:0.1px;transform:translateY(-0.50px) rotate(0.02deg) scaleX(0.84);">30</div></div>
<div style="left:0;top:341px;width:13px;height:1px;background:#858585;"></div>
<div style="left:0;top:342px;width:13px;height:13px;overflow:hidden;"><div class="t" style="left:0;width:13px;text-align:center;bottom:-0.3px;height:8px;line-height:8px;font-size:6.8px;color:#f4f4f4;-webkit-text-stroke:0.1px;transform:translateY(0.00px) rotate(0.02deg) scaleX(0.84);">31</div></div>
<div style="left:0;top:354px;width:13px;height:1px;background:#858585;"></div>
<div style="left:0;top:355px;width:13px;height:4px;overflow:hidden;"><div class="t" style="left:0;width:13px;text-align:center;bottom:-0.3px;height:8px;line-height:8px;font-size:6.8px;color:#f4f4f4;-webkit-text-stroke:0.1px;transform:translateY(0.00px) rotate(0.02deg) scaleX(0.84);">32</div></div>
<div style="left:0;top:358px;width:13px;height:1px;background:#858585;"></div>
<div style="left:0;top:359px;width:13px;height:12px;overflow:hidden;"><div class="t" style="left:0;width:13px;text-align:center;bottom:-0.3px;height:8px;line-height:8px;font-size:6.8px;color:#f4f4f4;-webkit-text-stroke:0.1px;transform:translateY(-0.20px) rotate(0.02deg) scaleX(0.84);">33</div></div>
<div style="left:0;top:370px;width:13px;height:1px;background:#858585;"></div>
<div style="left:0;top:371px;width:13px;height:3px;overflow:hidden;"><div class="t" style="left:0;width:13px;text-align:center;bottom:-0.3px;height:8px;line-height:8px;font-size:6.8px;color:#f4f4f4;-webkit-text-stroke:0.1px;transform:translateY(-0.20px) rotate(0.02deg) scaleX(0.84);">34</div></div>
<div style="left:0;top:373px;width:13px;height:1px;background:#858585;"></div>
<div style="left:0;top:374px;width:13px;height:14px;overflow:hidden;"><div class="t" style="left:0;width:13px;text-align:center;bottom:-0.3px;height:8px;line-height:8px;font-size:6.8px;color:#f4f4f4;-webkit-text-stroke:0.1px;transform:translateY(-0.40px) rotate(0.02deg) scaleX(0.84);">35</div></div>
<div style="left:0;top:387px;width:13px;height:1px;background:#858585;"></div>
<div style="left:0;top:388px;width:13px;height:13px;overflow:hidden;"><div class="t" style="left:0;width:13px;text-align:center;bottom:-0.3px;height:8px;line-height:8px;font-size:6.8px;color:#f4f4f4;-webkit-text-stroke:0.1px;transform:translateY(0.20px) rotate(0.02deg) scaleX(0.84);">36</div></div>
<div style="left:0;top:400px;width:13px;height:1px;background:#858585;"></div>
<div style="left:0;top:401px;width:13px;height:14px;overflow:hidden;"><div class="t" style="left:0;width:13px;text-align:center;bottom:-0.3px;height:8px;line-height:8px;font-size:6.8px;color:#f4f4f4;-webkit-text-stroke:0.1px;transform:translateY(-0.10px) rotate(0.02deg) scaleX(0.84);">37</div></div>
<div style="left:0;top:414px;width:13px;height:1px;background:#858585;"></div>
<div style="left:0;top:415px;width:13px;height:14px;overflow:hidden;"><div class="t" style="left:0;width:13px;text-align:center;bottom:-0.3px;height:8px;line-height:8px;font-size:6.8px;color:#f4f4f4;-webkit-text-stroke:0.1px;transform:translateY(-0.40px) rotate(0.02deg) scaleX(0.84);">38</div></div>
<div style="left:0;top:428px;width:13px;height:1px;background:#858585;"></div>
<div style="left:0;top:429px;width:13px;height:7px;overflow:hidden;"><div class="t" style="left:0;width:13px;text-align:center;bottom:-0.3px;height:8px;line-height:8px;font-size:6.8px;color:#f4f4f4;-webkit-text-stroke:0.1px;transform:translateY(0.00px) rotate(0.02deg) scaleX(0.84);">39</div></div>
<div style="left:0;top:435px;width:13px;height:1px;background:#858585;"></div>
<div style="left:0;top:436px;width:13px;height:13px;overflow:hidden;"><div class="t" style="left:0;width:13px;text-align:center;bottom:-0.3px;height:8px;line-height:8px;font-size:6.8px;color:#f4f4f4;-webkit-text-stroke:0.1px;transform:translateY(0.40px) rotate(0.02deg) scaleX(0.84);">40</div></div>
<div style="left:0;top:448px;width:13px;height:1px;background:#858585;"></div>
<div style="left:0;top:449px;width:13px;height:14px;overflow:hidden;"><div class="t" style="left:0;width:13px;text-align:center;bottom:-0.3px;height:8px;line-height:8px;font-size:6.8px;color:#f4f4f4;-webkit-text-stroke:0.1px;transform:translateY(0.00px) rotate(0.02deg) scaleX(0.84);">41</div></div>
<div style="left:0;top:462px;width:13px;height:1px;background:#858585;"></div>
</div>
<div style="left:22.6px;top:116.6px;width:32.4px;height:14px;border:1px solid #58c3a3;box-sizing:border-box;"></div>
<div style="left:53.6px;top:129.4px;width:2.2px;height:2.2px;background:#58c3a3;"></div>
<div class="t" style="top:133px;line-height:9px;height:9px;font-size:7.55px;color:#e2f2fa;left:31px;transform:translate(0.00px,0.00px) rotate(0.02deg);transform-origin:0 50%;">Langue / Taal :</div>
<div style="left:86.5px;top:130.3px;width:118.7px;height:13.3px;background:#fff;"></div>
<div class="t" style="top:132px;line-height:9px;height:9px;font-size:7.55px;color:#000;left:-4px;width:300px;text-align:center;transform:translate(0.00px,0.80px) rotate(0.02deg);transform-origin:50% 50%;-webkit-text-stroke:0.05px;">Français</div>
<div style="left:486.3px;top:124.8px;width:124.6px;height:27.2px;background:#f0f0f0;"></div>
<div class="t" style="top:129px;line-height:9px;height:9px;font-size:8.2px;color:#000;left:398px;width:300px;text-align:center;transform:translate(0.70px,0.74px) rotate(0.02deg) scaleX(0.943);transform-origin:50% 50%;-webkit-text-stroke:0.05px;">Nouveau calcul</div>
<div class="t" style="top:138px;line-height:9px;height:9px;font-size:8.2px;color:#000;left:398px;width:300px;text-align:center;transform:translate(0.70px,0.84px) rotate(0.02deg) scaleX(0.934);transform-origin:50% 50%;-webkit-text-stroke:0.05px;">Nieuwe berekening</div>
<div class="t" style="top:159px;line-height:9px;height:9px;font-size:8.27px;color:#fff;font-weight:bold;left:25px;transform:translate(0.00px,0.96px) rotate(0.02deg);transform-origin:0 50%;">Feuille de calcul destinée au dimensionnement du volume d'un vase d'expansion sanitaire</div>
<div style="left:23px;top:173px;width:1px;height:406px;background:#7c7c7c;"></div>
<div style="left:611px;top:173px;width:1px;height:406px;background:#7c7c7c;"></div>
<div style="left:23px;top:173px;width:589px;height:12px;background:#03bab0;"></div>
<div style="left:23px;top:173px;width:589px;height:1px;background:#3d6b67;"></div>
<div style="left:23px;top:184px;width:589px;height:1px;background:#2e8c85;"></div>
<div class="t" style="top:175px;line-height:9px;height:9px;font-size:7.76px;color:#fff;font-weight:bold;left:25px;transform:translate(0.00px,0.18px) rotate(0.02deg);transform-origin:0 50%;">Références</div>
<div style="left:23px;top:260px;width:589px;height:12px;background:#03bab0;"></div>
<div style="left:23px;top:260px;width:589px;height:1px;background:#3d6b67;"></div>
<div style="left:23px;top:271px;width:589px;height:1px;background:#2e8c85;"></div>
<div class="t" style="top:262px;line-height:9px;height:9px;font-size:7.76px;color:#fff;font-weight:bold;left:25px;transform:translate(0.00px,0.18px) rotate(0.02deg);transform-origin:0 50%;">Données relatives à l'installation</div>
<div style="left:23px;top:347px;width:589px;height:12px;background:#03bab0;"></div>
<div style="left:23px;top:347px;width:589px;height:1px;background:#3d6b67;"></div>
<div style="left:23px;top:358px;width:589px;height:1px;background:#2e8c85;"></div>
<div class="t" style="top:349px;line-height:9px;height:9px;font-size:7.76px;color:#fff;font-weight:bold;left:25px;transform:translate(0.00px,0.18px) rotate(0.02deg);transform-origin:0 50%;">Calculs</div>
<div style="left:23px;top:475px;width:589px;height:12px;background:#03bab0;"></div>
<div style="left:23px;top:475px;width:589px;height:1px;background:#3d6b67;"></div>
<div style="left:23px;top:486px;width:589px;height:1px;background:#2e8c85;"></div>
<div class="t" style="top:477px;line-height:9px;height:9px;font-size:7.76px;color:#fff;font-weight:bold;left:25px;transform:translate(0.00px,0.18px) rotate(0.02deg);transform-origin:0 50%;">Choix du vase d'expansion</div>
<div style="left:86px;top:188px;width:521px;height:69px;background:#fcdcc7;"></div>
<div style="left:86px;top:188px;width:521px;height:1px;background:#776b63;"></div>
<div style="left:86px;top:256px;width:521px;height:1px;background:#776b63;"></div>
<div style="left:86px;top:202px;width:521px;height:1px;background:#776b63;"></div>
<div style="left:86px;top:215px;width:521px;height:1px;background:#776b63;"></div>
<div style="left:86px;top:229px;width:521px;height:1px;background:#776b63;"></div>
<div style="left:86px;top:242px;width:521px;height:1px;background:#776b63;"></div>
<div style="left:86px;top:188px;width:1px;height:69px;background:#776b63;"></div>
<div style="left:606px;top:188px;width:1px;height:69px;background:#776b63;"></div>
<div style="left:435px;top:187px;width:51px;height:15px;background:#fff;"></div>
<div style="left:435px;top:188px;width:1px;height:15px;background:#776b63;"></div>
<div style="left:486px;top:188px;width:1px;height:15px;background:#776b63;"></div>
<div class="t" style="top:192px;line-height:9px;height:9px;font-size:7.55px;color:#848484;left:25px;transform:translate(0.00px,0.60px) rotate(0.02deg);transform-origin:0 50%;">Dossier</div>
<div class="t" style="top:206px;line-height:9px;height:9px;font-size:7.55px;color:#848484;left:25px;transform:translate(0.00px,0.40px) rotate(0.02deg);transform-origin:0 50%;">Nom</div>
<div class="t" style="top:220px;line-height:9px;height:9px;font-size:7.55px;color:#848484;left:25px;transform:translate(0.00px,0.10px) rotate(0.02deg);transform-origin:0 50%;">Adresse</div>
<div class="t" style="top:233px;line-height:9px;height:9px;font-size:7.55px;color:#848484;left:25px;transform:translate(0.00px,0.60px) rotate(0.02deg);transform-origin:0 50%;">Commune</div>
<div class="t" style="top:247px;line-height:9px;height:9px;font-size:7.55px;color:#848484;left:25px;transform:translate(0.00px,0.30px) rotate(0.02deg);transform-origin:0 50%;">Commentaire</div>
<div class="t" style="top:192px;line-height:9px;height:9px;font-size:7.55px;color:#848484;left:182px;width:300px;text-align:right;transform:translate(0.00px,0.60px) rotate(0.02deg);transform-origin:100% 50%;">Date</div>
<div style="left:486px;top:275px;width:50px;height:69px;background:#fcdcc7;"></div>
<div style="left:486px;top:275px;width:50px;height:1px;background:#776b63;"></div>
<div style="left:486px;top:343px;width:50px;height:1px;background:#776b63;"></div>
<div style="left:486px;top:289px;width:50px;height:1px;background:#776b63;"></div>
<div style="left:486px;top:303px;width:50px;height:1px;background:#776b63;"></div>
<div style="left:486px;top:316px;width:50px;height:1px;background:#776b63;"></div>
<div style="left:486px;top:330px;width:50px;height:1px;background:#776b63;"></div>
<div style="left:486px;top:275px;width:1px;height:69px;background:#776b63;"></div>
<div style="left:535px;top:275px;width:1px;height:69px;background:#776b63;"></div>
<div class="t" style="top:277px;line-height:9px;height:9px;font-size:7.55px;color:#848484;left:25px;transform:translate(0.00px,0.90px) rotate(0.02deg);transform-origin:0 50%;">1 Contenance en eau du boiler</div>
<div class="t" style="top:277px;line-height:9px;height:9px;font-size:7.55px;color:#848484;left:436px;transform:translate(0.50px,0.90px) rotate(0.02deg);transform-origin:0 50%;">V<sub>bal</sub></div>
<div class="t" style="top:277px;line-height:9px;height:9px;font-size:7.55px;color:#848484;left:408px;width:300px;text-align:center;transform:translate(0.00px,0.90px) rotate(0.02deg);transform-origin:50% 50%;"><span style='font-family:DejaVu Sans,sans-serif;font-size:8.6px'>ℓ</span></div>
<div class="t" style="top:291px;line-height:9px;height:9px;font-size:7.55px;color:#848484;left:25px;transform:translate(0.00px,0.40px) rotate(0.02deg);transform-origin:0 50%;">2 Température de consigne pour l'eau chaude sanitaire</div>
<div class="t" style="top:291px;line-height:9px;height:9px;font-size:7.55px;color:#848484;left:436px;transform:translate(0.50px,0.40px) rotate(0.02deg);transform-origin:0 50%;">T<sub>max</sub></div>
<div class="t" style="top:291px;line-height:9px;height:9px;font-size:7.55px;color:#848484;left:408px;width:300px;text-align:center;transform:translate(0.00px,0.40px) rotate(0.02deg);transform-origin:50% 50%;">°C</div>
<div class="t" style="top:292px;line-height:7px;height:7px;font-size:6.8px;color:#848484;left:445px;width:300px;text-align:center;transform:translate(0.00px,0.13px) rotate(0.02deg);transform-origin:50% 50%;">②</div>
<div class="t" style="top:305px;line-height:9px;height:9px;font-size:7.55px;color:#848484;left:25px;transform:translate(0.00px,0.00px) rotate(0.02deg);transform-origin:0 50%;">3 Pression de tarage de la soupape de sûreté</div>
<div class="t" style="top:305px;line-height:9px;height:9px;font-size:7.55px;color:#848484;left:436px;transform:translate(0.50px,0.00px) rotate(0.02deg);transform-origin:0 50%;">p<sub>sv</sub></div>
<div class="t" style="top:305px;line-height:9px;height:9px;font-size:7.55px;color:#848484;left:408px;width:300px;text-align:center;transform:translate(0.00px,0.00px) rotate(0.02deg);transform-origin:50% 50%;">bar</div>
<div class="t" style="top:318px;line-height:9px;height:9px;font-size:7.55px;color:#848484;left:25px;transform:translate(0.00px,0.60px) rotate(0.02deg);transform-origin:0 50%;">4 Pression de l'eau dans l'installation au niveau du vase d'expansion</div>
<div class="t" style="top:318px;line-height:9px;height:9px;font-size:7.55px;color:#848484;left:436px;transform:translate(0.50px,0.60px) rotate(0.02deg);transform-origin:0 50%;">p<sub>i</sub></div>
<div class="t" style="top:318px;line-height:9px;height:9px;font-size:7.55px;color:#848484;left:408px;width:300px;text-align:center;transform:translate(0.00px,0.60px) rotate(0.02deg);transform-origin:50% 50%;">bar</div>
<div class="t" style="top:319px;line-height:7px;height:7px;font-size:6.8px;color:#848484;left:445px;width:300px;text-align:center;transform:translate(0.00px,0.33px) rotate(0.02deg);transform-origin:50% 50%;">④</div>
<div class="t" style="top:332px;line-height:9px;height:9px;font-size:7.55px;color:#848484;left:25px;transform:translate(0.00px,0.10px) rotate(0.02deg);transform-origin:0 50%;">5 Différence de hauteur (delta h) entre le vase d'expansion et la soupape de sûreté</div>
<div class="t" style="top:332px;line-height:9px;height:9px;font-size:7.55px;color:#848484;left:436px;transform:translate(0.50px,0.10px) rotate(0.02deg);transform-origin:0 50%;">Δh</div>
<div class="t" style="top:332px;line-height:9px;height:9px;font-size:7.55px;color:#848484;left:408px;width:300px;text-align:center;transform:translate(0.00px,0.10px) rotate(0.02deg);transform-origin:50% 50%;">m</div>
<div class="t" style="top:332px;line-height:7px;height:7px;font-size:6.8px;color:#848484;left:445px;width:300px;text-align:center;transform:translate(0.00px,0.83px) rotate(0.02deg);transform-origin:50% 50%;">⑤</div>
<div class="t" style="top:364px;line-height:9px;height:9px;font-size:7.55px;color:#848484;left:25px;transform:translate(0.00px,0.90px) rotate(0.02deg);transform-origin:0 50%;">6 Coefficient d'expansion (remplissage à 10°C)</div>
<div class="t" style="top:364px;line-height:9px;height:9px;font-size:7.55px;color:#848484;left:207px;transform:translate(0.00px,0.90px) rotate(0.02deg);transform-origin:0 50%;">e</div>
<div class="t" style="top:364px;line-height:9px;height:9px;font-size:7.55px;color:#848484;left:408px;width:300px;text-align:center;transform:translate(0.00px,0.90px) rotate(0.02deg);transform-origin:50% 50%;">%</div>
<div class="t" style="top:378px;line-height:9px;height:9px;font-size:7.55px;color:#848484;left:25px;transform:translate(0.00px,0.40px) rotate(0.02deg);transform-origin:0 50%;">7 Volume d'expansion de l'eau</div>
<div class="t" style="top:378px;line-height:9px;height:9px;font-size:7.55px;color:#848484;left:207px;transform:translate(0.00px,0.40px) rotate(0.02deg);transform-origin:0 50%;">V<sub>ex</sub> = V<sub>bal</sub> x e / 100</div>
<div class="t" style="top:378px;line-height:9px;height:9px;font-size:7.55px;color:#848484;left:408px;width:300px;text-align:center;transform:translate(0.00px,0.40px) rotate(0.02deg);transform-origin:50% 50%;"><span style='font-family:DejaVu Sans,sans-serif;font-size:8.6px'>ℓ</span></div>
<div class="t" style="top:392px;line-height:9px;height:9px;font-size:7.55px;color:#848484;left:25px;transform:translate(0.00px,0.00px) rotate(0.02deg);transform-origin:0 50%;">8 Pression maximale de gonflage du vase</div>
<div class="t" style="top:392px;line-height:9px;height:9px;font-size:7.55px;color:#848484;left:207px;transform:translate(0.00px,0.00px) rotate(0.02deg);transform-origin:0 50%;">p<sub>0,max</sub> =&nbsp;&nbsp;&nbsp; p<sub>i</sub> - <span style='color:#2474bd;font-size:7.9px'>0,2</span></div>
<div class="t" style="top:392px;line-height:9px;height:9px;font-size:7.55px;color:#848484;left:408px;width:300px;text-align:center;transform:translate(0.00px,0.00px) rotate(0.02deg);transform-origin:50% 50%;">bar</div>
<div class="t" style="top:405px;line-height:9px;height:9px;font-size:7.55px;color:#848484;left:408px;width:300px;text-align:center;transform:translate(0.00px,0.70px) rotate(0.02deg);transform-origin:50% 50%;">bar</div>
<div class="t" style="top:406px;line-height:7px;height:7px;font-size:6.8px;color:#848484;left:445px;width:300px;text-align:center;transform:translate(0.00px,0.43px) rotate(0.02deg);transform-origin:50% 50%;">①</div>
<div class="t" style="top:419px;line-height:9px;height:9px;font-size:7.55px;color:#848484;left:25px;transform:translate(0.00px,0.20px) rotate(0.02deg);transform-origin:0 50%;">9 Différerence de pression consécutive à 'delta h'</div>
<div class="t" style="top:419px;line-height:9px;height:9px;font-size:7.55px;color:#848484;left:207px;transform:translate(0.00px,0.20px) rotate(0.02deg);transform-origin:0 50%;">Δp = Δh x 0,098</div>
<div class="t" style="top:419px;line-height:9px;height:9px;font-size:7.55px;color:#848484;left:408px;width:300px;text-align:center;transform:translate(0.00px,0.20px) rotate(0.02deg);transform-origin:50% 50%;">bar</div>
<div class="t" style="top:432px;line-height:9px;height:9px;font-size:7.55px;color:#848484;left:25px;transform:translate(0.00px,0.50px) rotate(0.02deg);transform-origin:0 50%;">10 Pression maximale admissible</div>
<div class="t" style="top:432px;line-height:9px;height:9px;font-size:7.55px;color:#848484;left:207px;transform:translate(0.00px,0.50px) rotate(0.02deg);transform-origin:0 50%;">p<sub>f,max</sub> = (p<sub>sv</sub> x <span style='color:#2474bd;font-size:7.9px'>0,8</span>&nbsp;) + Δp</div>
<div class="t" style="top:432px;line-height:9px;height:9px;font-size:7.55px;color:#848484;left:408px;width:300px;text-align:center;transform:translate(0.00px,0.50px) rotate(0.02deg);transform-origin:50% 50%;">bar</div>
<div class="t" style="top:446px;line-height:9px;height:9px;font-size:7.55px;color:#848484;left:408px;width:300px;text-align:center;transform:translate(0.00px,0.30px) rotate(0.02deg);transform-origin:50% 50%;">-</div>
<div class="t" style="top:447px;line-height:7px;height:7px;font-size:6.8px;color:#848484;left:445px;width:300px;text-align:center;transform:translate(0.00px,0.03px) rotate(0.02deg);transform-origin:50% 50%;">③</div>
<div class="t" style="top:459px;line-height:9px;height:9px;font-size:7.55px;color:#848484;left:25px;transform:translate(0.00px,0.60px) rotate(0.02deg);transform-origin:0 50%;">11 Volume minimal du vase</div>
<div class="t" style="top:459px;line-height:9px;height:9px;font-size:7.55px;color:#848484;left:207px;transform:translate(0.00px,0.60px) rotate(0.02deg);transform-origin:0 50%;">V<sub>N,min</sub> = MAX (V<sub>ex</sub> / (1 - (p<sub>0,max</sub>+1)/(p<sub>f,max</sub>+1) - (p<sub>i</sub>-p<sub>0,max</sub>)/(p<sub>i</sub>+1)) ; 0,04 x V<sub>bal</sub>)</div>
<div class="t" style="top:459px;line-height:9px;height:9px;font-size:7.55px;color:#848484;left:408px;width:300px;text-align:center;transform:translate(0.00px,0.60px) rotate(0.02deg);transform-origin:50% 50%;"><span style='font-family:DejaVu Sans,sans-serif;font-size:8.6px'>ℓ</span></div>
<div class="t" style="top:407px;line-height:6px;height:6px;font-size:5.9px;color:#848484;left:207px;transform:translate(0.00px,0.41px) rotate(0.02deg);transform-origin:0 50%;">valeur par défaut :</div>
<div style="left:266px;top:404px;width:32px;height:14px;background:#fcdcc7;"></div>
<div style="left:266px;top:404px;width:32px;height:1px;background:#776b63;"></div>
<div style="left:266px;top:417px;width:32px;height:1px;background:#776b63;"></div>
<div style="left:266px;top:404px;width:1px;height:14px;background:#776b63;"></div>
<div style="left:297px;top:404px;width:1px;height:14px;background:#776b63;"></div>
<div class="t" style="top:407px;line-height:6px;height:6px;font-size:5.9px;color:#555;left:132px;width:300px;text-align:center;transform:translate(0.00px,0.31px) rotate(0.02deg);transform-origin:50% 50%;">0,2</div>
<div class="t" style="top:448px;line-height:6px;height:6px;font-size:5.9px;color:#848484;left:207px;transform:translate(0.00px,0.01px) rotate(0.02deg);transform-origin:0 50%;">valeur par défaut :</div>
<div style="left:266px;top:444px;width:32px;height:14px;background:#fcdcc7;"></div>
<div style="left:266px;top:444px;width:32px;height:1px;background:#776b63;"></div>
<div style="left:266px;top:457px;width:32px;height:1px;background:#776b63;"></div>
<div style="left:266px;top:444px;width:1px;height:14px;background:#776b63;"></div>
<div style="left:297px;top:444px;width:1px;height:14px;background:#776b63;"></div>
<div class="t" style="top:447px;line-height:6px;height:6px;font-size:5.9px;color:#555;left:132px;width:300px;text-align:center;transform:translate(0.00px,0.91px) rotate(0.02deg);transform-origin:50% 50%;">0,8</div>
<div style="left:205px;top:490px;width:48px;height:55px;background:#fcdcc7;"></div>
<div style="left:205px;top:490px;width:48px;height:1px;background:#776b63;"></div>
<div style="left:205px;top:544px;width:48px;height:1px;background:#776b63;"></div>
<div style="left:205px;top:503px;width:48px;height:1px;background:#776b63;"></div>
<div style="left:205px;top:517px;width:48px;height:1px;background:#776b63;"></div>
<div style="left:205px;top:530px;width:48px;height:1px;background:#776b63;"></div>
<div style="left:205px;top:490px;width:1px;height:55px;background:#776b63;"></div>
<div style="left:252px;top:490px;width:1px;height:55px;background:#776b63;"></div>
<div class="t" style="top:492px;line-height:9px;height:9px;font-size:7.55px;color:#848484;left:25px;transform:translate(0.00px,0.60px) rotate(0.02deg);transform-origin:0 50%;">Vase à circulation forcée</div>
<div class="t" style="top:506px;line-height:9px;height:9px;font-size:7.55px;color:#848484;left:25px;transform:translate(0.00px,0.20px) rotate(0.02deg);transform-origin:0 50%;">Position</div>
<div class="t" style="top:519px;line-height:9px;height:9px;font-size:7.55px;color:#848484;left:25px;transform:translate(0.00px,0.80px) rotate(0.02deg);transform-origin:0 50%;">Membrane/Vessie interchangeable</div>
<div class="t" style="top:533px;line-height:9px;height:9px;font-size:7.55px;color:#848484;left:25px;transform:translate(0.00px,0.40px) rotate(0.02deg);transform-origin:0 50%;">Marque</div>
<div class="t" style="top:554px;line-height:9px;height:9px;font-size:7.55px;color:#848484;left:25px;transform:translate(0.00px,0.80px) rotate(0.02deg);transform-origin:0 50%;">Type</div>
<div style="left:205px;top:565px;width:144px;height:16px;background:#fcdcc7;"></div>
<div style="left:205px;top:565px;width:144px;height:1px;background:#776b63;"></div>
<div style="left:205px;top:580px;width:144px;height:1px;background:#776b63;"></div>
<div style="left:205px;top:565px;width:1px;height:16px;background:#776b63;"></div>
<div style="left:348px;top:565px;width:1px;height:16px;background:#776b63;"></div>
<div style="left:988.5px;top:107px;width:11.5px;height:472px;background:#6a6a6a;"></div>
<div style="left:990.5px;top:116px;width:7.6px;height:455.5px;background:#565656;"></div>
<div style="left:990.5px;top:109.6px;width:7.6px;height:6.4px;background:#a2a2a2;"></div>
<svg style="left:992.3px;top:111.3px;" width="4" height="3" viewBox="0 0 4 3"><path d="M0.3 2.6h3.4l-1.7-2.2z" fill="#333"/></svg>
<div style="left:990.5px;top:116px;width:7.6px;height:233px;background:#969696;"></div>
<div style="left:990.5px;top:572px;width:7.6px;height:7px;background:#a2a2a2;"></div>
<svg style="left:992.3px;top:574.2px;" width="4" height="3" viewBox="0 0 4 3"><path d="M0.3 0.4h3.4l-1.7 2.2z" fill="#333"/></svg>
<div style="left:0px;top:579px;width:1000px;height:14.6px;background:#6a6a6a;"></div>
<svg style="left:10px;top:583px;" width="5" height="6" viewBox="0 0 5 6"><path d="M3.4 0.8L1.2 3l2.2 2.2" fill="none" stroke="#9a9a9a" stroke-width="0.7"/></svg>
<svg style="left:27px;top:583px;" width="5" height="6" viewBox="0 0 5 6"><path d="M1.6 0.8L3.8 3 1.6 5.2" fill="none" stroke="#b5b5b5" stroke-width="0.7"/></svg>
<div style="left:52.3px;top:581px;width:0.7px;height:11px;background:#8a8a8a;"></div>
<div class="t" style="top:582px;line-height:7px;height:7px;font-size:6.6px;color:#f2f2f2;left:-86px;width:300px;text-align:center;transform:translate(0.40px,0.26px) rotate(0.02deg) scaleX(1.018);transform-origin:50% 50%;">Info</div>
<div style="left:78px;top:579px;width:74.5px;height:13.2px;background:linear-gradient(#ffffff 35%,#d6f0ee 70%,#9ddcd6 100%);"></div>
<div class="t" style="top:582px;line-height:7px;height:7px;font-size:6.6px;color:#1d6b5f;font-weight:bold;left:-36px;width:300px;text-align:center;transform:translate(0.70px,0.06px) rotate(0.02deg) scaleX(0.999);transform-origin:50% 50%;">Calcul - Berekening</div>
<div style="left:152.5px;top:579.6px;width:83px;height:12.6px;background:#0a86c4;"></div>
<div class="t" style="top:582px;line-height:7px;height:7px;font-size:6.6px;color:#e8f4fb;left:44px;width:300px;text-align:center;transform:translate(0.00px,0.26px) rotate(0.02deg) scaleX(1.003);transform-origin:50% 50%;">Choix vase - Keuze vat</div>
<div style="left:238px;top:580.3px;width:44px;height:11.9px;background:#0db5aa;border:0.6px solid #4c7f7b;box-sizing:border-box;"></div>
<div class="t" style="top:582px;line-height:7px;height:7px;font-size:6.6px;color:#124a46;left:110px;width:300px;text-align:center;transform:translate(0.20px,0.26px) rotate(0.02deg) scaleX(0.986);transform-origin:50% 50%;">Richtlijnen</div>
<div style="left:285px;top:580.3px;width:41.7px;height:11.9px;background:#0db5aa;border:0.6px solid #4c7f7b;box-sizing:border-box;"></div>
<div class="t" style="top:582px;line-height:7px;height:7px;font-size:6.6px;color:#124a46;left:155px;width:300px;text-align:center;transform:translate(0.20px,0.26px) rotate(0.02deg) scaleX(0.995);transform-origin:50% 50%;">Directives</div>
<svg style="left:344.5px;top:581.8px;" width="9" height="9" viewBox="0 0 9 9"><circle cx="4.4" cy="4.3" r="3.3" fill="none" stroke="#f4f4f4" stroke-width="0.9"/><path d="M4.4 2.4v3.8M2.5 4.3h3.8" stroke="#f4f4f4" stroke-width="1"/></svg>
<div style="left:897.5px;top:583.2px;width:1px;height:1.2px;background:#e0e0e0;"></div>
<div style="left:897.5px;top:585.6px;width:1px;height:1.2px;background:#e0e0e0;"></div>
<div style="left:897.5px;top:588px;width:1px;height:1.2px;background:#e0e0e0;"></div>
<div style="left:906.5px;top:582px;width:82px;height:8.4px;background:#565656;"></div>
<div style="left:906.7px;top:582px;width:6.3px;height:8.4px;background:#a2a2a2;"></div>
<svg style="left:907.8px;top:584.2px;" width="4" height="4" viewBox="0 0 4 4"><path d="M3 0.3v3.4L0.7 2z" fill="#222"/></svg>
<div style="left:914.6px;top:582px;width:45.6px;height:8.4px;background:#969696;"></div>
<div style="left:982px;top:582px;width:6.3px;height:8.4px;background:#a2a2a2;"></div>
<svg style="left:983.4px;top:584.2px;" width="4" height="4" viewBox="0 0 4 4"><path d="M1 0.3v3.4L3.3 2z" fill="#222"/></svg>
<div style="left:0px;top:593.6px;width:1000px;height:10.4px;background:#c8c6c4;"></div>
<div class="t" style="top:595px;line-height:7px;height:7px;font-size:6.3px;color:#333;left:4px;transform:translate(0.00px,0.56px) rotate(0.02deg) scaleX(0.879);transform-origin:0 50%;">Ready</div>
<svg style="left:30.5px;top:595px;" width="8" height="8" viewBox="0 0 8 8"><circle cx="4" cy="1.6" r="0.9" fill="none" stroke="#444" stroke-width="0.6"/><path d="M1 3.2h6 M4 3.2v2 M2.2 7.4L4 5.2l1.8 2.2" fill="none" stroke="#444" stroke-width="0.7"/></svg>
<div class="t" style="top:595px;line-height:7px;height:7px;font-size:6.3px;color:#333;left:39px;transform:translate(0.60px,0.56px) rotate(0.02deg) scaleX(0.932);transform-origin:0 50%;">Accessibility: Investigate</div>
<div style="left:849.5px;top:594px;width:13.5px;height:10px;background:#b2b0ae;"></div>
<svg style="left:852.5px;top:595.5px;" width="8" height="7" viewBox="0 0 8 7"><rect x="0.4" y="0.4" width="6.6000000000000005" height="5.6000000000000005" fill="#b2b0ae" stroke="#444" stroke-width="0.6"/><path d="M2.60 0.4v5.6000000000000005" stroke="#444" stroke-width="0.5"/><path d="M4.80 0.4v5.6000000000000005" stroke="#444" stroke-width="0.5"/><path d="M0.4 2.27h6.6000000000000005" stroke="#444" stroke-width="0.5"/><path d="M0.4 4.13h6.6000000000000005" stroke="#444" stroke-width="0.5"/></svg>
<svg style="left:870.5px;top:595.5px;" width="8" height="7" viewBox="0 0 8 7"><rect x="0.5" y="0.5" width="6.6" height="5.8" fill="none" stroke="#444" stroke-width="0.7"/><path d="M2.2 0.5v5.8 M5.4 0.5v5.8 M2.2 2.2h3.2 M2.2 4.2h3.2" stroke="#444" stroke-width="0.5"/></svg>
<svg style="left:891.5px;top:595.5px;" width="8" height="7" viewBox="0 0 8 7"><rect x="0.5" y="0.5" width="6.6" height="5.8" fill="none" stroke="#444" stroke-width="0.7"/><path d="M2.2 0.5v3.6 M4 0.5v3.6 M0.5 4.1h5.4" stroke="#444" stroke-width="0.6"/></svg>
<div class="t" style="top:594px;line-height:7px;height:7px;font-size:6.5px;color:#555;left:761px;width:300px;text-align:center;transform:translate(0.00px,0.43px) rotate(0.02deg);transform-origin:50% 50%;">−</div>
<div style="left:916px;top:599px;width:52px;height:0.7px;background:#777;"></div>
<div style="left:942px;top:596.2px;width:1.7px;height:6px;background:#555;"></div>
<div class="t" style="top:594px;line-height:7px;height:7px;font-size:6.5px;color:#555;left:822px;width:300px;text-align:center;transform:translate(0.70px,0.63px) rotate(0.02deg);transform-origin:50% 50%;">+</div>
<div class="t" style="top:595px;line-height:7px;height:7px;font-size:6.3px;color:#2a2a2a;left:981px;transform:translate(0.00px,0.56px) rotate(0.02deg) scaleX(0.919);transform-origin:0 50%;">100%</div>
</div></body></html>
